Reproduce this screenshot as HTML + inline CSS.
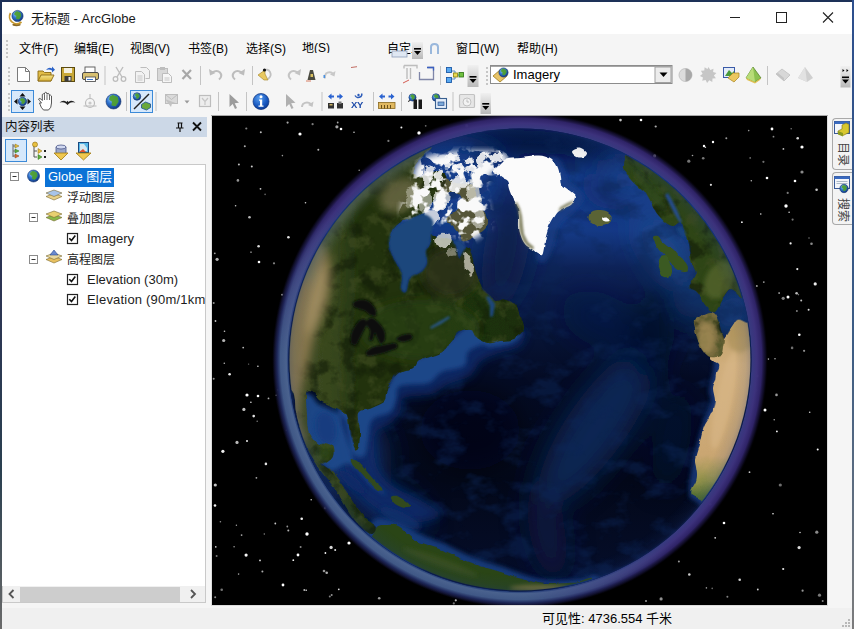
<!DOCTYPE html>
<html lang="zh-CN">
<head>
<meta charset="utf-8">
<title>无标题 - ArcGlobe</title>
<style>
*{box-sizing:border-box;margin:0;padding:0}
html,body{width:854px;height:629px;overflow:hidden;background:#f5f5f5}
body{position:relative;font-family:"Liberation Sans","Noto Sans CJK SC",sans-serif;font-size:12px;color:#111}
.abs{position:absolute}
#win{position:absolute;left:0;top:0;width:854px;height:629px;background:#f5f5f5;overflow:hidden}
#bt{left:0;top:0;width:854px;height:2px;background:#1d3158}
#bl{left:0;top:0;width:2px;height:629px;background:linear-gradient(#1d3158 0%,#2c3454 45%,#2a4050 75%,#6a6a6a 100%)}
#br{left:852px;top:0;width:2px;height:629px;background:linear-gradient(#2d4f8e 0%,#3c5c84 55%,#7c7c7c 100%)}
#title{left:1px;top:2px;width:851px;height:32px;background:#fff}
#title .t{position:absolute;left:30px;top:7px;font-size:13px;line-height:20px;color:#1a1a1a;white-space:nowrap}
#menu{left:1px;top:34px;width:851px;height:28px;background:#f5f5f5}
#menu span{position:absolute;top:7px;font-size:12px;line-height:16px;white-space:nowrap;color:#000}
.grip{position:absolute;width:2px;border-left:2px dotted #b9b9b9}
#tb1{left:1px;top:62px;width:851px;height:27px}
#tb2{left:1px;top:89px;width:851px;height:26px}
#toc{left:1px;top:115px;width:209px;height:493px;background:#f5f5f5}
#tochead{left:0;top:2px;width:206px;height:20px;background:#ccd8e7}
#tochead .t{position:absolute;left:4px;top:1px;font-size:12.5px;line-height:18px;color:#111}
#tree{left:1px;top:49px;width:204px;height:422px;background:#fff;border:1px solid #c9c9c9;border-left:1px solid #fff;border-bottom:none;overflow:hidden}
#tree .r{position:absolute;font-size:12px;line-height:16px;white-space:nowrap;color:#1c1c1c}
#hs{left:1px;top:471px;width:204px;height:17px;background:#f0f0f0;border:1px solid #c9c9c9;border-top:none}
#view{left:212px;top:116px;width:615px;height:489px;background:#000;overflow:hidden}
#vborder{left:211px;top:115px;width:617px;height:491px;background:#dcdcdc;border-top:1px solid #a8a8a8}
#status{left:1px;top:608px;width:851px;height:21px;background:#f0f0f0}
#status .t{position:absolute;left:541px;top:2px;font-size:13px;line-height:18px;white-space:nowrap;color:#000}
.tab{position:absolute;left:832px;width:20px;background:#f3f3f3;border:1px solid #a9a9a9;border-right:none;border-radius:4px 0 0 4px}
.tab .v{position:absolute;left:-3px;width:26px;height:14px;font-size:12px;line-height:14px;color:#444;text-align:center;transform:rotate(90deg);transform-origin:50% 50%;white-space:nowrap}
</style>
</head>
<body>
<div id="win">
  <div id="title" class="abs">
    <div class="t">无标题 - ArcGlobe</div>
  </div>
  <div id="menu" class="abs">
    <div class="grip" style="left:5px;top:6px;height:18px"></div>
    <span style="left:18px">文件(F)</span>
    <span style="left:73px">编辑(E)</span>
    <span style="left:129px">视图(V)</span>
    <span style="left:187px">书签(B)</span>
    <span style="left:245px">选择(S)</span>
    <span style="left:301px;width:29px;height:11px;overflow:hidden;top:8px;line-height:12px">地(S)</span>
    <span style="left:386px;width:25px;overflow:hidden">自定义(C)</span>
    <span style="left:455px">窗口(W)</span>
    <span style="left:516px">帮助(H)</span>
  </div>
  <div id="tb1" class="abs"></div>
  <div id="tb2" class="abs"></div>
  <div id="toc" class="abs">
    <div id="tochead" class="abs"><div class="t">内容列表</div></div>
    <div id="tree" class="abs">
      <div class="r" style="left:42px;top:3px;height:19px;width:69px;background:#0b72d6"></div>
      <div class="r" style="left:45px;top:4px;color:#fff;font-size:13px">Globe 图层</div>
      <div class="r" style="left:64px;top:25px">浮动图层</div>
      <div class="r" style="left:64px;top:46px">叠加图层</div>
      <div class="r" style="left:84px;top:66px;font-size:13px">Imagery</div>
      <div class="r" style="left:64px;top:87px">高程图层</div>
      <div class="r" style="left:84px;top:107px;font-size:13px">Elevation (30m)</div>
      <div class="r" style="left:84px;top:127px;font-size:13px;letter-spacing:0.2px">Elevation (90m/1km)</div>
    </div>
    <div id="hs" class="abs"></div>
  </div>
  <div id="vborder" class="abs"></div>
  <div id="view" class="abs"><svg width="615" height="489" viewBox="212 116 615 489" style="position:absolute;left:0;top:0;display:block">
<defs>
<clipPath id="gc"><circle cx="520.0" cy="360.0" r="231.5"/></clipPath>
<clipPath id="lc"><circle cx="520.0" cy="360.0" r="230.5"/></clipPath>
<radialGradient id="halo" cx="520.0" cy="360.0" r="248.0" gradientUnits="userSpaceOnUse">
 <stop offset="0.93" stop-color="#363c80"/>
 <stop offset="0.955" stop-color="#3c327c"/>
 <stop offset="0.975" stop-color="#31256c" stop-opacity="0.95"/>
 <stop offset="0.99" stop-color="#1a1440" stop-opacity="0.55"/>
 <stop offset="1" stop-color="#05030c" stop-opacity="0"/>
</radialGradient>
<radialGradient id="halo2" cx="520.0" cy="360.0" r="248.0" gradientUnits="userSpaceOnUse">
 <stop offset="0.932" stop-color="#16306e"/>
 <stop offset="0.942" stop-color="#4a628e"/>
 <stop offset="0.966" stop-color="#405886"/>
 <stop offset="0.98" stop-color="#1c2858" stop-opacity="0.9"/>
 <stop offset="1" stop-color="#0a0c20" stop-opacity="0"/>
</radialGradient>
<linearGradient id="hm" x1="356" y1="524" x2="520" y2="360" gradientUnits="userSpaceOnUse">
 <stop offset="0" stop-color="#fff"/>
 <stop offset="0.3" stop-color="#fff"/>
 <stop offset="0.9" stop-color="#fff" stop-opacity="0"/>
</linearGradient>
<mask id="hmask" maskUnits="userSpaceOnUse" x="212" y="116" width="615" height="489"><rect x="212" y="116" width="615" height="489" fill="url(#hm)"/></mask>
<linearGradient id="sea" x1="0" y1="129" x2="0" y2="591" gradientUnits="userSpaceOnUse">
 <stop offset="0" stop-color="#081a48"/>
 <stop offset="0.045" stop-color="#0e2660"/>
 <stop offset="0.10" stop-color="#173e8c"/>
 <stop offset="0.22" stop-color="#153a86"/>
 <stop offset="0.30" stop-color="#0e2358"/>
 <stop offset="0.36" stop-color="#0a1c48"/>
 <stop offset="0.435" stop-color="#071538"/>
 <stop offset="0.54" stop-color="#040b24"/>
 <stop offset="0.76" stop-color="#030819"/>
 <stop offset="1" stop-color="#050e2c"/>
</linearGradient>
<radialGradient id="atm" cx="520.0" cy="360.0" r="231.5" gradientUnits="userSpaceOnUse">
 <stop offset="0" stop-color="#1c3c86" stop-opacity="0"/>
 <stop offset="0.93" stop-color="#1c3c86" stop-opacity="0"/>
 <stop offset="0.975" stop-color="#1c3c86" stop-opacity="0.10"/>
 <stop offset="0.992" stop-color="#1a3880" stop-opacity="0.2"/>
 <stop offset="1" stop-color="#122868" stop-opacity="0.55"/>
</radialGradient>
<linearGradient id="nag" x1="290" y1="0" x2="520" y2="0" gradientUnits="userSpaceOnUse">
 <stop offset="0" stop-color="#424c26"/>
 <stop offset="0.2" stop-color="#35451c"/>
 <stop offset="0.3" stop-color="#22330f"/>
 <stop offset="1" stop-color="#1e2f0e"/>
</linearGradient>
<linearGradient id="afg" x1="0" y1="320" x2="0" y2="500" gradientUnits="userSpaceOnUse">
 <stop offset="0" stop-color="#b89a62"/>
 <stop offset="0.25" stop-color="#d0ae7c"/>
 <stop offset="0.75" stop-color="#caa672"/>
 <stop offset="0.9" stop-color="#8f9048"/>
 <stop offset="1" stop-color="#4c6a2a"/>
</linearGradient>
<filter id="b1" x="-20%" y="-20%" width="140%" height="140%"><feGaussianBlur stdDeviation="0.8"/></filter>
<filter id="rough" x="-10%" y="-10%" width="120%" height="120%"><feTurbulence type="fractalNoise" baseFrequency="0.09" numOctaves="3" seed="4" result="n"/><feDisplacementMap in="SourceGraphic" in2="n" scale="10" xChannelSelector="R" yChannelSelector="G" result="d"/><feGaussianBlur in="d" stdDeviation="0.7"/></filter>
<filter id="rough2" x="-5%" y="-5%" width="110%" height="110%"><feTurbulence type="fractalNoise" baseFrequency="0.07" numOctaves="3" seed="11" result="n"/><feDisplacementMap in="SourceGraphic" in2="n" scale="5" xChannelSelector="R" yChannelSelector="G" result="d"/><feGaussianBlur in="d" stdDeviation="0.7"/></filter>
<filter id="snowf" x="-5%" y="-5%" width="110%" height="110%"><feTurbulence type="fractalNoise" baseFrequency="0.085" numOctaves="3" seed="8" result="n"/><feColorMatrix in="n" type="matrix" values="0 0 0 0 0.95  0 0 0 0 0.95  0 0 0 0 0.95  10 0 0 0 -4.9" result="w"/><feGaussianBlur in="SourceGraphic" stdDeviation="3" result="m"/><feComposite in="w" in2="m" operator="in"/></filter>
<filter id="ltex" color-interpolation-filters="sRGB" x="0" y="0" width="100%" height="100%"><feTurbulence type="fractalNoise" baseFrequency="0.06" numOctaves="4" seed="5" result="n"/><feColorMatrix in="n" type="matrix" values="0 0 0 0 0.25  0 0 0 0 0.30  0 0 0 0 0.13  5 0 0 0 -2.5" result="w"/><feComposite in="w" in2="SourceGraphic" operator="in"/></filter>
<filter id="dtex" color-interpolation-filters="sRGB" x="0" y="0" width="100%" height="100%"><feTurbulence type="fractalNoise" baseFrequency="0.05" numOctaves="4" seed="17" result="n"/><feColorMatrix in="n" type="matrix" values="0 0 0 0 0.07  0 0 0 0 0.11  0 0 0 0 0.03  0 5 0 0 -2.6" result="w"/><feComposite in="w" in2="SourceGraphic" operator="in"/></filter>
<filter id="otex" color-interpolation-filters="sRGB" x="0" y="0" width="100%" height="100%"><feTurbulence type="fractalNoise" baseFrequency="0.03 0.05" numOctaves="4" seed="9" result="n"/><feColorMatrix in="n" type="matrix" values="0 0 0 0 0.05  0 0 0 0 0.15  0 0 0 0 0.34  4 0 0 0 -2.0" result="w"/><feComposite in="w" in2="SourceGraphic" operator="in"/></filter>
<filter id="b2" x="-30%" y="-30%" width="160%" height="160%"><feGaussianBlur stdDeviation="2.2"/></filter>
<filter id="b4" x="-40%" y="-40%" width="180%" height="180%"><feGaussianBlur stdDeviation="5"/></filter>
<filter id="b8" x="-50%" y="-50%" width="200%" height="200%"><feGaussianBlur stdDeviation="13"/></filter>
</defs>
<rect x="212" y="116" width="615" height="489" fill="#000"/>
<g><circle cx="248.6" cy="364.1" r="0.7" fill="#fff" opacity="0.45"/><circle cx="250.9" cy="402.2" r="0.7" fill="#fff" opacity="0.99"/><circle cx="241.6" cy="535.1" r="0.9" fill="#fff" opacity="0.65"/><circle cx="276.2" cy="395.2" r="0.8" fill="#fff" opacity="0.50"/><circle cx="249.5" cy="217.3" r="1.3" fill="#fff" opacity="0.72"/><circle cx="779.1" cy="293.1" r="0.8" fill="#fff" opacity="0.88"/><circle cx="749.5" cy="472.2" r="0.9" fill="#fff" opacity="0.77"/><circle cx="257.9" cy="366.3" r="0.8" fill="#fff" opacity="0.85"/><circle cx="237.0" cy="442.4" r="1.6" fill="#fff" opacity="0.73"/><circle cx="696.7" cy="515.5" r="0.9" fill="#fff" opacity="0.65"/><circle cx="792.1" cy="347.9" r="1.3" fill="#fff" opacity="0.44"/><circle cx="756.8" cy="286.0" r="1.0" fill="#fff" opacity="0.61"/><circle cx="775.0" cy="358.8" r="0.8" fill="#fff" opacity="0.67"/><circle cx="715.2" cy="537.8" r="0.9" fill="#fff" opacity="0.82"/><circle cx="817.7" cy="449.5" r="1.0" fill="#fff" opacity="0.97"/><circle cx="305.5" cy="202.8" r="0.8" fill="#fff" opacity="0.80"/><circle cx="220.4" cy="521.7" r="0.8" fill="#fff" opacity="0.56"/><circle cx="215.5" cy="321.0" r="0.9" fill="#fff" opacity="0.77"/><circle cx="739.7" cy="579.8" r="1.3" fill="#fff" opacity="0.81"/><circle cx="246.1" cy="555.1" r="1.6" fill="#fff" opacity="0.97"/><circle cx="329.8" cy="596.5" r="1.0" fill="#fff" opacity="0.50"/><circle cx="421.5" cy="142.6" r="0.7" fill="#fff" opacity="0.59"/><circle cx="601.9" cy="582.3" r="1.1" fill="#fff" opacity="0.49"/><circle cx="288.3" cy="530.4" r="1.0" fill="#fff" opacity="0.69"/><circle cx="796.6" cy="293.2" r="1.3" fill="#fff" opacity="0.73"/><circle cx="229.6" cy="374.2" r="1.3" fill="#fff" opacity="0.92"/><circle cx="816.8" cy="532.2" r="1.6" fill="#fff" opacity="0.54"/><circle cx="661.1" cy="598.9" r="1.6" fill="#fff" opacity="0.57"/><circle cx="799.3" cy="334.8" r="1.3" fill="#fff" opacity="0.99"/><circle cx="798.4" cy="294.6" r="0.8" fill="#fff" opacity="0.46"/><circle cx="508.9" cy="596.8" r="1.1" fill="#fff" opacity="0.72"/><circle cx="703.2" cy="158.3" r="1.3" fill="#fff" opacity="0.47"/><circle cx="335.2" cy="549.9" r="1.0" fill="#fff" opacity="0.87"/><circle cx="808.6" cy="309.8" r="1.0" fill="#fff" opacity="0.85"/><circle cx="265.1" cy="194.4" r="0.8" fill="#fff" opacity="0.42"/><circle cx="787.7" cy="192.9" r="1.1" fill="#fff" opacity="0.48"/><circle cx="221.7" cy="589.8" r="1.3" fill="#fff" opacity="0.46"/><circle cx="672.4" cy="184.8" r="1.6" fill="#fff" opacity="0.41"/><circle cx="748.7" cy="130.6" r="0.8" fill="#fff" opacity="0.58"/><circle cx="293.3" cy="560.2" r="0.9" fill="#fff" opacity="0.94"/><circle cx="751.3" cy="180.7" r="0.8" fill="#fff" opacity="0.71"/><circle cx="224.5" cy="331.3" r="0.8" fill="#fff" opacity="0.77"/><circle cx="688.7" cy="190.0" r="0.8" fill="#fff" opacity="0.55"/><circle cx="278.0" cy="389.9" r="0.8" fill="#fff" opacity="0.41"/><circle cx="238.9" cy="164.6" r="1.0" fill="#fff" opacity="0.74"/><circle cx="678.9" cy="561.4" r="1.0" fill="#fff" opacity="0.60"/><circle cx="809.7" cy="412.2" r="0.8" fill="#fff" opacity="0.82"/><circle cx="790.6" cy="243.4" r="1.1" fill="#fff" opacity="0.94"/><circle cx="689.3" cy="574.5" r="1.3" fill="#fff" opacity="0.80"/><circle cx="300.6" cy="546.9" r="1.0" fill="#fff" opacity="0.53"/><circle cx="796.9" cy="311.0" r="1.0" fill="#fff" opacity="0.50"/><circle cx="646.0" cy="601.1" r="1.0" fill="#fff" opacity="0.60"/><circle cx="655.7" cy="126.5" r="1.1" fill="#fff" opacity="0.68"/><circle cx="802.0" cy="172.0" r="1.6" fill="#fff" opacity="0.54"/><circle cx="750.2" cy="157.9" r="0.9" fill="#fff" opacity="0.42"/><circle cx="292.4" cy="322.6" r="1.3" fill="#fff" opacity="0.71"/><circle cx="776.5" cy="394.9" r="1.3" fill="#fff" opacity="0.60"/><circle cx="325.4" cy="553.0" r="0.9" fill="#fff" opacity="0.96"/><circle cx="264.3" cy="534.0" r="0.7" fill="#fff" opacity="0.56"/><circle cx="287.6" cy="122.6" r="1.1" fill="#fff" opacity="0.65"/><circle cx="774.2" cy="419.8" r="0.7" fill="#fff" opacity="0.72"/><circle cx="359.2" cy="170.3" r="0.8" fill="#fff" opacity="0.56"/><circle cx="324.0" cy="571.0" r="1.3" fill="#fff" opacity="0.58"/><circle cx="425.7" cy="125.8" r="0.9" fill="#fff" opacity="0.42"/><circle cx="224.3" cy="363.3" r="0.8" fill="#fff" opacity="0.71"/><circle cx="757.8" cy="589.5" r="0.9" fill="#fff" opacity="0.81"/><circle cx="815.2" cy="283.9" r="1.6" fill="#fff" opacity="0.93"/><circle cx="819.5" cy="595.2" r="1.6" fill="#fff" opacity="0.48"/><circle cx="256.4" cy="477.8" r="0.9" fill="#fff" opacity="0.66"/><circle cx="247.0" cy="441.0" r="1.0" fill="#fff" opacity="0.92"/><circle cx="802.6" cy="590.7" r="1.1" fill="#fff" opacity="0.59"/><circle cx="234.1" cy="546.7" r="0.8" fill="#fff" opacity="0.61"/><circle cx="213.7" cy="302.9" r="1.0" fill="#fff" opacity="0.57"/><circle cx="688.8" cy="161.2" r="1.6" fill="#fff" opacity="0.45"/><circle cx="457.9" cy="137.3" r="0.7" fill="#fff" opacity="0.46"/><circle cx="800.0" cy="532.5" r="0.8" fill="#fff" opacity="0.79"/><circle cx="816.6" cy="189.8" r="1.3" fill="#fff" opacity="0.77"/><circle cx="301.7" cy="518.7" r="1.3" fill="#fff" opacity="0.94"/><circle cx="710.9" cy="184.8" r="1.1" fill="#fff" opacity="0.85"/><circle cx="222.9" cy="451.3" r="1.6" fill="#fff" opacity="0.94"/><circle cx="354.0" cy="132.2" r="0.8" fill="#fff" opacity="0.78"/><circle cx="801.2" cy="300.4" r="1.0" fill="#fff" opacity="0.74"/><circle cx="215.0" cy="505.5" r="1.3" fill="#fff" opacity="0.96"/><circle cx="763.4" cy="161.8" r="1.1" fill="#fff" opacity="0.44"/><circle cx="258.6" cy="246.3" r="1.3" fill="#fff" opacity="0.85"/><circle cx="260.0" cy="560.4" r="0.9" fill="#fff" opacity="0.86"/><circle cx="260.5" cy="188.8" r="0.9" fill="#fff" opacity="0.79"/><circle cx="510.8" cy="590.6" r="0.7" fill="#fff" opacity="0.65"/><circle cx="760.8" cy="214.0" r="0.7" fill="#fff" opacity="0.96"/><circle cx="223.7" cy="340.5" r="1.6" fill="#fff" opacity="0.70"/><circle cx="822.7" cy="601.1" r="1.0" fill="#fff" opacity="0.53"/><circle cx="792.6" cy="219.6" r="1.1" fill="#fff" opacity="0.45"/><circle cx="282.1" cy="294.8" r="1.0" fill="#fff" opacity="0.75"/><circle cx="511.0" cy="129.1" r="0.7" fill="#fff" opacity="0.78"/><circle cx="789.1" cy="212.3" r="0.7" fill="#fff" opacity="0.94"/><circle cx="453.8" cy="603.4" r="1.1" fill="#fff" opacity="0.45"/><circle cx="780.3" cy="485.0" r="1.6" fill="#fff" opacity="0.43"/><circle cx="275.3" cy="523.5" r="0.9" fill="#fff" opacity="0.78"/><circle cx="304.3" cy="589.9" r="1.0" fill="#fff" opacity="0.71"/><circle cx="799.1" cy="547.6" r="1.6" fill="#fff" opacity="0.86"/><circle cx="262.4" cy="571.6" r="1.0" fill="#fff" opacity="0.67"/><circle cx="388.4" cy="140.9" r="1.1" fill="#fff" opacity="0.48"/><circle cx="811.5" cy="243.7" r="1.3" fill="#fff" opacity="0.54"/><circle cx="286.4" cy="430.2" r="0.7" fill="#fff" opacity="0.42"/><circle cx="768.4" cy="359.1" r="0.8" fill="#fff" opacity="0.67"/><circle cx="336.9" cy="126.8" r="1.6" fill="#fff" opacity="0.65"/><circle cx="251.0" cy="252.2" r="0.9" fill="#fff" opacity="0.48"/><circle cx="741.9" cy="222.2" r="0.9" fill="#fff" opacity="0.94"/><circle cx="712.2" cy="588.4" r="0.8" fill="#fff" opacity="0.42"/><circle cx="647.9" cy="553.2" r="1.0" fill="#fff" opacity="0.78"/><circle cx="783.2" cy="569.0" r="1.1" fill="#fff" opacity="0.91"/><circle cx="809.0" cy="238.0" r="0.7" fill="#fff" opacity="0.53"/><circle cx="306.2" cy="590.3" r="0.7" fill="#fff" opacity="0.96"/><circle cx="776.9" cy="431.4" r="0.9" fill="#fff" opacity="0.98"/><circle cx="274.0" cy="263.3" r="1.1" fill="#fff" opacity="0.52"/><circle cx="213.7" cy="378.8" r="1.0" fill="#fff" opacity="0.57"/><circle cx="548.3" cy="131.3" r="1.0" fill="#fff" opacity="0.66"/><circle cx="401.4" cy="127.6" r="1.0" fill="#fff" opacity="0.93"/><circle cx="217.1" cy="259.3" r="1.6" fill="#fff" opacity="0.70"/><circle cx="338.8" cy="589.3" r="0.9" fill="#fff" opacity="0.86"/><circle cx="375.5" cy="550.1" r="0.7" fill="#fff" opacity="0.78"/><circle cx="620.8" cy="579.0" r="0.8" fill="#fff" opacity="0.76"/><circle cx="246.3" cy="128.5" r="1.1" fill="#fff" opacity="0.49"/><circle cx="244.8" cy="146.3" r="1.0" fill="#fff" opacity="0.67"/><circle cx="282.4" cy="155.6" r="0.8" fill="#fff" opacity="0.60"/><circle cx="326.7" cy="572.8" r="1.3" fill="#fff" opacity="0.68"/><circle cx="727.4" cy="596.7" r="1.0" fill="#fff" opacity="0.50"/><circle cx="214.8" cy="253.3" r="0.9" fill="#fff" opacity="0.65"/><circle cx="755.6" cy="390.3" r="1.6" fill="#fff" opacity="0.42"/><circle cx="243.2" cy="347.6" r="0.9" fill="#fff" opacity="0.72"/><circle cx="705.4" cy="147.2" r="0.8" fill="#fff" opacity="0.85"/><circle cx="763.8" cy="282.1" r="0.9" fill="#fff" opacity="0.60"/><circle cx="797.7" cy="138.2" r="1.3" fill="#fff" opacity="0.83"/><circle cx="215.3" cy="485.0" r="1.6" fill="#fff" opacity="0.78"/><circle cx="791.2" cy="128.8" r="0.8" fill="#fff" opacity="0.46"/><circle cx="773.0" cy="513.8" r="0.8" fill="#fff" opacity="0.96"/><circle cx="325.1" cy="507.9" r="1.3" fill="#fff" opacity="0.47"/><circle cx="357.8" cy="536.4" r="1.0" fill="#fff" opacity="0.49"/><circle cx="692.5" cy="155.5" r="0.8" fill="#fff" opacity="0.64"/><circle cx="257.2" cy="421.2" r="0.8" fill="#fff" opacity="0.46"/><circle cx="287.3" cy="526.5" r="0.9" fill="#fff" opacity="0.57"/><circle cx="326.9" cy="231.7" r="0.9" fill="#fff" opacity="0.74"/><circle cx="455.8" cy="600.3" r="1.1" fill="#fff" opacity="0.72"/><circle cx="215.8" cy="546.9" r="0.8" fill="#fff" opacity="0.90"/><circle cx="773.5" cy="136.7" r="0.9" fill="#fff" opacity="0.54"/><circle cx="243.9" cy="409.4" r="1.6" fill="#fff" opacity="0.75"/><circle cx="783.2" cy="298.3" r="1.6" fill="#fff" opacity="0.51"/><circle cx="620.5" cy="120.1" r="1.3" fill="#fff" opacity="0.76"/><circle cx="337.7" cy="122.5" r="0.9" fill="#fff" opacity="0.65"/><circle cx="260.8" cy="132.3" r="1.0" fill="#fff" opacity="0.73"/><circle cx="251.8" cy="166.4" r="1.0" fill="#fff" opacity="0.80"/><circle cx="379.2" cy="598.3" r="1.3" fill="#fff" opacity="0.58"/><circle cx="797.3" cy="269.1" r="1.1" fill="#fff" opacity="0.93"/><circle cx="466.8" cy="125.9" r="1.6" fill="#fff" opacity="0.80"/><circle cx="216.6" cy="556.1" r="1.0" fill="#fff" opacity="0.47"/><circle cx="268.5" cy="398.4" r="0.9" fill="#fff" opacity="0.68"/><circle cx="312.6" cy="124.2" r="1.1" fill="#fff" opacity="0.49"/><circle cx="318.3" cy="149.7" r="1.0" fill="#fff" opacity="0.69"/><circle cx="706.4" cy="587.9" r="0.8" fill="#fff" opacity="0.58"/><circle cx="726.3" cy="138.2" r="1.0" fill="#fff" opacity="0.59"/><circle cx="265.9" cy="463.9" r="1.3" fill="#fff" opacity="0.89"/><circle cx="311.2" cy="499.7" r="0.8" fill="#fff" opacity="0.77"/><circle cx="238.6" cy="574.1" r="0.8" fill="#fff" opacity="0.63"/><circle cx="288.4" cy="237.3" r="1.3" fill="#fff" opacity="0.89"/><circle cx="331.1" cy="547.4" r="1.6" fill="#fff" opacity="0.85"/><circle cx="236.4" cy="525.2" r="0.7" fill="#fff" opacity="0.63"/><circle cx="215.2" cy="597.2" r="1.0" fill="#fff" opacity="0.54"/><circle cx="291.7" cy="326.7" r="0.7" fill="#fff" opacity="0.71"/><circle cx="237.9" cy="180.4" r="1.3" fill="#fff" opacity="0.59"/><circle cx="654.6" cy="155.9" r="1.6" fill="#fff" opacity="0.56"/><circle cx="444.6" cy="580.1" r="0.8" fill="#fff" opacity="0.33"/><circle cx="253.7" cy="416.1" r="1.3" fill="#fff" opacity="0.89"/><circle cx="331.7" cy="595.1" r="1.0" fill="#fff" opacity="0.57"/><circle cx="710.1" cy="504.2" r="1.3" fill="#fff" opacity="0.70"/><circle cx="783.4" cy="148.9" r="0.9" fill="#fff" opacity="0.77"/><circle cx="804.1" cy="350.8" r="1.1" fill="#fff" opacity="0.56"/><circle cx="235.6" cy="205.7" r="0.8" fill="#fff" opacity="0.78"/><circle cx="300.0" cy="134.0" r="1.6" fill="#fff"/><circle cx="419.0" cy="133.0" r="1.7" fill="#fff"/><circle cx="247.0" cy="395.0" r="1.6" fill="#fff"/><circle cx="258.0" cy="396.0" r="1.3" fill="#fff"/><circle cx="341.0" cy="129.0" r="1.3" fill="#fff"/><circle cx="786.0" cy="206.0" r="1.7" fill="#fff"/><circle cx="802.0" cy="147.0" r="1.6" fill="#fff"/><circle cx="772.0" cy="129.0" r="1.4" fill="#fff"/><circle cx="788.0" cy="297.0" r="1.5" fill="#fff"/><circle cx="747.0" cy="415.0" r="1.6" fill="#fff"/><circle cx="765.0" cy="410.0" r="1.5" fill="#fff"/><circle cx="307.0" cy="534.0" r="1.7" fill="#fff"/><circle cx="298.0" cy="555.0" r="1.4" fill="#fff"/><circle cx="349.0" cy="543.0" r="1.6" fill="#fff"/><circle cx="283.0" cy="585.0" r="1.4" fill="#fff"/><circle cx="259.0" cy="262.0" r="1.3" fill="#fff"/><circle cx="767.0" cy="178.0" r="1.3" fill="#fff"/><circle cx="795.0" cy="181.0" r="1.3" fill="#fff"/><circle cx="704.0" cy="146.0" r="1.2" fill="#fff"/><circle cx="713.0" cy="142.0" r="1.2" fill="#fff"/><circle cx="746.0" cy="338.0" r="1.3" fill="#fff"/><circle cx="757.0" cy="376.0" r="1.4" fill="#fff"/><circle cx="724.0" cy="523.0" r="1.3" fill="#fff"/><circle cx="641.0" cy="120.0" r="1.3" fill="#fff"/></g>
<circle cx="520.0" cy="360.0" r="248.0" fill="url(#halo)"/>
<circle cx="520.0" cy="360.0" r="248.0" fill="url(#halo2)" mask="url(#hmask)"/>
<g clip-path="url(#gc)">
<circle cx="520.0" cy="360.0" r="232.5" fill="url(#sea)"/>
<g filter="url(#b8)"><ellipse cx="455.0" cy="178.0" rx="44.0" ry="34.0" fill="#173f8c" transform="rotate(-20 455 178)" opacity="0.95"/><ellipse cx="430.0" cy="160.0" rx="30.0" ry="12.0" fill="#173f8c" transform="rotate(-30 430 160)" opacity="0.8"/><ellipse cx="506.0" cy="250.0" rx="22.0" ry="62.0" fill="#091b46" transform="rotate(10 506 250)" opacity="0.95"/><ellipse cx="503.0" cy="200.0" rx="12.0" ry="28.0" fill="#0c2058" transform="rotate(20 503 200)" opacity="0.9"/><ellipse cx="602.0" cy="192.0" rx="26.0" ry="14.0" fill="#0e2868" transform="rotate(35 602 192)" opacity="0.8"/><ellipse cx="535.0" cy="142.0" rx="85.0" ry="12.0" fill="#05123a" transform="rotate(3 535 142)" opacity="0.95"/><ellipse cx="668.0" cy="250.0" rx="20.0" ry="40.0" fill="#1a488a" transform="rotate(-35 668 250)" opacity="0.95"/><ellipse cx="692.0" cy="298.0" rx="10.0" ry="20.0" fill="#1a488a" transform="rotate(-10 692 298)" opacity="0.85"/><ellipse cx="630.0" cy="180.0" rx="30.0" ry="14.0" fill="#184488" transform="rotate(38 630 180)" opacity="0.7"/><ellipse cx="598.0" cy="425.0" rx="30.0" ry="95.0" fill="#0d2a5a" transform="rotate(35 598 425)" opacity="0.9"/><ellipse cx="547.0" cy="530.0" rx="18.0" ry="50.0" fill="#0a1c48" transform="rotate(-10 547 530)" opacity="0.7"/><ellipse cx="600.0" cy="320.0" rx="40.0" ry="26.0" fill="#0a1c48" transform="rotate(25 600 320)" opacity="0.5"/><ellipse cx="652.0" cy="335.0" rx="22.0" ry="42.0" fill="#050d28" transform="rotate(8 652 335)" opacity="0.85"/><ellipse cx="672.0" cy="440.0" rx="18.0" ry="50.0" fill="#071338" transform="rotate(10 672 440)" opacity="0.6"/><ellipse cx="470.0" cy="430.0" rx="50.0" ry="40.0" fill="#02050f" opacity="0.6"/><ellipse cx="345.0" cy="450.0" rx="36.0" ry="46.0" fill="#173c7c" transform="rotate(-25 345 450)" opacity="0.9"/><ellipse cx="385.0" cy="505.0" rx="46.0" ry="20.0" fill="#133270" transform="rotate(32 385 505)" opacity="0.9"/><ellipse cx="732.0" cy="312.0" rx="20.0" ry="28.0" fill="#1a4688" transform="rotate(20 732 312)" opacity="0.9"/></g>
<rect x="285" y="125" width="470" height="470" fill="#fff" filter="url(#otex)" opacity="0.5"/>
<g filter="url(#b4)"><path d="M524.0 330.0 C527.3 331.7 524.7 342.0 520.0 346.0 C515.3 350.0 502.7 351.3 496.0 354.0 C489.3 356.7 484.3 358.3 480.0 362.0 C475.7 365.7 475.3 372.3 470.0 376.0 C464.7 379.7 454.3 381.0 448.0 384.0 C441.7 387.0 439.3 391.7 432.0 394.0 C424.7 396.3 409.3 395.0 404.0 398.0 C398.7 401.0 402.3 407.7 400.0 412.0 C397.7 416.3 394.0 420.7 390.0 424.0 C386.0 427.3 378.7 427.3 376.0 432.0 C373.3 436.7 373.7 445.7 374.0 452.0 C374.3 458.3 375.0 464.3 378.0 470.0 C381.0 475.7 385.0 481.0 392.0 486.0 C399.0 491.0 412.0 495.0 420.0 500.0 C428.0 505.0 443.3 512.7 440.0 516.0 C436.7 519.3 415.0 526.0 400.0 520.0 C385.0 514.0 360.0 500.0 350.0 480.0 C340.0 460.0 335.0 414.2 340.0 400.0 C345.0 385.8 370.0 400.3 380.0 395.0 C390.0 389.7 390.0 375.8 400.0 368.0 C410.0 360.2 428.3 355.0 440.0 348.0 C451.7 341.0 460.0 328.0 470.0 326.0 C480.0 324.0 491.0 335.3 500.0 336.0 C509.0 336.7 520.7 328.3 524.0 330.0Z" fill="#0e2a66" opacity="0.9"/></g>
<g filter="url(#b2)"><path d="M522.0 332.0 C524.0 333.2 517.3 340.5 512.0 343.0 C506.7 345.5 495.0 346.7 490.0 347.0 C485.0 347.3 485.7 344.2 482.0 345.0 C478.3 345.8 471.0 348.5 468.0 352.0 C465.0 355.5 468.3 362.7 464.0 366.0 C459.7 369.3 448.0 369.2 442.0 372.0 C436.0 374.8 435.0 380.7 428.0 383.0 C421.0 385.3 405.3 383.2 400.0 386.0 C394.7 388.8 397.7 395.7 396.0 400.0 C394.3 404.3 394.0 408.7 390.0 412.0 C386.0 415.3 375.7 415.3 372.0 420.0 C368.3 424.7 369.3 434.0 368.0 440.0 C366.7 446.0 366.7 454.0 364.0 456.0 C361.3 458.0 355.2 458.0 352.0 452.0 C348.8 446.0 348.7 427.0 345.0 420.0 C341.3 413.0 334.5 412.7 330.0 410.0 C325.5 407.3 321.0 406.3 318.0 404.0 C315.0 401.7 314.5 397.5 312.0 396.0 C309.5 394.5 304.7 389.3 303.0 395.0 C301.3 400.7 300.5 420.8 302.0 430.0 C303.5 439.2 307.3 443.3 312.0 450.0 C316.7 456.7 323.7 467.7 330.0 470.0 C336.3 472.3 343.0 461.3 350.0 464.0 C357.0 466.7 366.0 481.0 372.0 486.0 C378.0 491.0 388.0 496.7 386.0 494.0 C384.0 491.3 365.7 476.5 360.0 470.0 C354.3 463.5 355.3 466.7 352.0 455.0 C348.7 443.3 335.3 410.0 340.0 400.0 C344.7 390.0 370.0 400.3 380.0 395.0 C390.0 389.7 390.0 375.8 400.0 368.0 C410.0 360.2 428.3 355.0 440.0 348.0 C451.7 341.0 460.0 328.0 470.0 326.0 C480.0 324.0 491.3 335.0 500.0 336.0 C508.7 337.0 520.0 330.8 522.0 332.0Z" fill="#1c4a8a" opacity="0.95"/><path d="M372.0 522.0 C375.0 515.5 390.0 519.0 398.0 521.0 C406.0 523.0 412.2 530.2 420.0 534.0 C427.8 537.8 436.7 540.3 445.0 544.0 C453.3 547.7 460.8 552.3 470.0 556.0 C479.2 559.7 488.3 562.2 500.0 566.0 C511.7 569.8 526.7 576.8 540.0 579.0 C553.3 581.2 570.7 579.7 580.0 579.0 C589.3 578.3 593.3 573.2 596.0 575.0 C598.7 576.8 632.0 592.5 596.0 590.0 C560.0 587.5 417.3 571.3 380.0 560.0 C342.7 548.7 369.0 528.5 372.0 522.0Z" fill="#173e80" opacity="0.9"/><path d="M716.0 356.0 C713.2 358.0 714.2 366.3 713.0 372.0 C711.8 377.7 709.3 385.0 709.0 390.0 C708.7 395.0 711.8 397.0 711.0 402.0 C710.2 407.0 706.2 413.7 704.0 420.0 C701.8 426.3 699.8 433.3 698.0 440.0 C696.2 446.7 694.5 451.7 693.0 460.0 C691.5 468.3 688.8 483.3 689.0 490.0 C689.2 496.7 688.8 498.3 694.0 500.0 C699.2 501.7 714.0 523.3 720.0 500.0 C726.0 476.7 730.7 384.0 730.0 360.0 C729.3 336.0 718.8 354.0 716.0 356.0Z" fill="#153a7c" opacity="0.85"/><path d="M548.0 158.0 C548.7 154.7 556.7 156.3 560.0 160.0 C563.3 163.7 564.0 174.0 568.0 180.0 C572.0 186.0 583.0 190.7 584.0 196.0 C585.0 201.3 578.0 207.3 574.0 212.0 C570.0 216.7 563.7 217.7 560.0 224.0 C556.3 230.3 554.7 243.7 552.0 250.0 C549.3 256.3 546.7 261.0 544.0 262.0 C541.3 263.0 535.7 261.3 536.0 256.0 C536.3 250.7 542.7 237.7 546.0 230.0 C549.3 222.3 552.7 215.0 556.0 210.0 C559.3 205.0 566.0 205.0 566.0 200.0 C566.0 195.0 559.0 187.0 556.0 180.0 C553.0 173.0 547.3 161.3 548.0 158.0Z" fill="#173f86" opacity="0.7"/></g>
<g filter="url(#b2)"><ellipse cx="326.0" cy="428.0" rx="10.0" ry="16.0" fill="#163a7e" transform="rotate(-10 326 428)" opacity="0.9"/><ellipse cx="352.0" cy="482.0" rx="16.0" ry="5.0" fill="#0f2a66" transform="rotate(42 352 482)" opacity="0.9"/><ellipse cx="400.0" cy="518.0" rx="22.0" ry="6.0" fill="#122e6c" transform="rotate(25 400 518)" opacity="0.8"/></g>
<g clip-path="url(#lc)"><g filter="url(#rough2)">
<path d="M432.0 147.0 C430.9 150.2 426.7 152.3 424.0 155.0 C421.3 157.7 417.7 160.2 416.0 163.0 C414.3 165.8 413.3 169.7 414.0 172.0 C414.7 174.3 417.3 176.8 420.0 177.0 C422.7 177.2 427.0 174.0 430.0 173.0 C433.0 172.0 435.3 170.5 438.0 171.0 C440.7 171.5 445.0 173.5 446.0 176.0 C447.0 178.5 445.5 182.7 444.0 186.0 C442.5 189.3 439.3 192.8 437.0 196.0 C434.7 199.2 432.2 202.2 430.0 205.0 C427.8 207.8 427.0 210.7 424.0 213.0 C421.0 215.3 416.0 217.5 412.0 219.0 C408.0 220.5 403.3 220.0 400.0 222.0 C396.7 224.0 393.8 227.2 392.0 231.0 C390.2 234.8 388.7 240.3 389.0 245.0 C389.3 249.7 392.2 255.0 394.0 259.0 C395.8 263.0 398.7 265.8 400.0 269.0 C401.3 272.2 401.8 274.7 402.0 278.0 C402.2 281.3 400.3 286.7 401.0 289.0 C401.7 291.3 404.5 293.8 406.0 292.0 C407.5 290.2 407.5 281.3 410.0 278.0 C412.5 274.7 418.2 274.5 421.0 272.0 C423.8 269.5 426.2 266.5 427.0 263.0 C427.8 259.5 425.3 254.2 426.0 251.0 C426.7 247.8 430.3 246.5 431.0 244.0 C431.7 241.5 429.5 237.3 430.0 236.0 C430.5 234.7 431.8 235.7 434.0 236.0 C436.2 236.3 440.0 237.2 443.0 238.0 C446.0 238.8 449.8 239.7 452.0 241.0 C454.2 242.3 454.8 243.2 456.0 246.0 C457.2 248.8 457.8 257.0 459.0 258.0 C460.2 259.0 461.8 253.8 463.0 252.0 C464.2 250.2 464.7 246.8 466.0 247.0 C467.3 247.2 469.3 248.8 471.0 253.0 C472.7 257.2 474.2 266.3 476.0 272.0 C477.8 277.7 479.7 283.2 482.0 287.0 C484.3 290.8 487.7 292.7 490.0 295.0 C492.3 297.3 493.3 300.3 496.0 301.0 C498.7 301.7 502.7 298.2 506.0 299.0 C509.3 299.8 513.7 303.2 516.0 306.0 C518.3 308.8 518.8 312.0 520.0 316.0 C521.2 320.0 524.0 326.2 523.0 330.0 C522.0 333.8 517.8 337.2 514.0 339.0 C510.2 340.8 504.3 340.3 500.0 341.0 C495.7 341.7 492.0 343.7 488.0 343.0 C484.0 342.3 478.8 339.2 476.0 337.0 C473.2 334.8 473.8 331.0 471.0 330.0 C468.2 329.0 462.2 329.2 459.0 331.0 C455.8 332.8 454.8 337.5 452.0 341.0 C449.2 344.5 445.7 349.3 442.0 352.0 C438.3 354.7 433.8 355.7 430.0 357.0 C426.2 358.3 421.8 358.2 419.0 360.0 C416.2 361.8 416.2 366.0 413.0 368.0 C409.8 370.0 404.0 369.3 400.0 372.0 C396.0 374.7 391.3 380.3 389.0 384.0 C386.7 387.7 386.8 391.2 386.0 394.0 C385.2 396.8 386.3 398.8 384.0 401.0 C381.7 403.2 376.3 405.0 372.0 407.0 C367.7 409.0 360.0 409.2 358.0 413.0 C356.0 416.8 359.8 424.7 360.0 430.0 C360.2 435.3 359.7 441.8 359.0 445.0 C358.3 448.2 357.2 449.8 356.0 449.0 C354.8 448.2 353.2 443.8 352.0 440.0 C350.8 436.2 349.8 430.2 349.0 426.0 C348.2 421.8 348.3 417.5 347.0 415.0 C345.7 412.5 343.8 412.7 341.0 411.0 C338.2 409.3 333.5 406.8 330.0 405.0 C326.5 403.2 322.7 402.2 320.0 400.0 C317.3 397.8 316.2 393.5 314.0 392.0 C311.8 390.5 308.3 389.7 307.0 391.0 C305.7 392.3 306.0 396.0 306.0 400.0 C306.0 404.0 306.7 410.0 307.0 415.0 C307.3 420.0 306.8 425.8 308.0 430.0 C309.2 434.2 312.2 437.5 314.0 440.0 C315.8 442.5 317.5 444.5 319.0 445.0 C320.5 445.5 320.8 442.8 323.0 443.0 C325.2 443.2 330.3 443.8 332.0 446.0 C333.7 448.2 333.8 453.3 333.0 456.0 C332.2 458.7 329.0 460.8 327.0 462.0 C325.0 463.2 320.5 461.7 321.0 463.0 C321.5 464.3 326.8 466.8 330.0 470.0 C333.2 473.2 337.2 478.3 340.0 482.0 C342.8 485.7 344.8 488.7 347.0 492.0 C349.2 495.3 351.0 498.8 353.0 502.0 C355.0 505.2 356.7 508.0 359.0 511.0 C361.3 514.0 364.2 517.3 367.0 520.0 C369.8 522.7 375.2 524.7 376.0 527.0 C376.8 529.3 374.3 533.8 372.0 534.0 C369.7 534.2 365.2 530.7 362.0 528.0 C358.8 525.3 355.7 521.5 353.0 518.0 C350.3 514.5 348.3 510.8 346.0 507.0 C343.7 503.2 341.3 498.8 339.0 495.0 C336.7 491.2 334.7 487.7 332.0 484.0 C329.3 480.3 326.0 477.0 323.0 473.0 C320.0 469.0 316.8 464.5 314.0 460.0 C311.2 455.5 308.3 451.0 306.0 446.0 C303.7 441.0 301.7 435.7 300.0 430.0 C298.3 424.3 297.2 418.3 296.0 412.0 C294.8 405.7 295.7 396.4 293.0 392.0 C290.3 387.6 282.2 388.4 279.9 385.5 C277.5 382.7 279.2 378.6 279.0 375.2 C278.8 371.7 278.6 368.2 278.5 364.7 C278.5 361.2 278.5 357.8 278.6 354.3 C278.6 350.8 278.8 347.3 279.0 343.9 C279.3 340.4 279.6 336.9 280.0 333.5 C280.3 330.0 280.8 326.6 281.3 323.1 C281.9 319.7 282.5 316.3 283.1 312.9 C283.8 309.4 284.6 306.0 285.4 302.7 C286.2 299.3 287.1 295.9 288.1 292.6 C289.1 289.2 290.1 285.9 291.2 282.6 C292.3 279.3 293.5 276.1 294.8 272.8 C296.0 269.6 297.4 266.4 298.8 263.2 C300.2 260.0 301.6 256.8 303.1 253.7 C304.7 250.6 306.3 247.5 307.9 244.4 C309.6 241.4 311.3 238.4 313.1 235.4 C314.9 232.4 316.8 229.5 318.7 226.6 C320.6 223.7 322.6 220.8 324.7 218.0 C326.7 215.2 328.8 212.4 331.0 209.7 C333.1 207.0 335.4 204.3 337.6 201.7 C339.9 199.0 342.3 196.5 344.7 193.9 C347.0 191.4 349.5 188.9 352.0 186.5 C354.5 184.1 357.0 181.7 359.6 179.4 C362.2 177.1 364.9 174.9 367.6 172.7 C370.3 170.5 373.0 168.3 375.8 166.3 C378.6 164.2 381.5 162.2 384.3 160.2 C387.2 158.3 390.1 156.4 393.1 154.5 C396.0 152.7 399.0 150.9 402.1 149.2 C405.1 147.6 408.2 145.9 411.3 144.4 C414.4 142.8 417.5 141.3 420.7 139.9 C423.9 138.4 428.4 134.6 430.3 135.8 C432.2 137.0 433.1 143.8 432.0 147.0Z" fill="url(#nag)" />
<path d="M377.0 528.0 C380.1 524.1 384.5 525.3 388.0 525.0 C391.5 524.7 394.8 524.7 398.0 526.0 C401.2 527.3 404.2 530.7 407.0 533.0 C409.8 535.3 411.5 538.0 415.0 540.0 C418.5 542.0 423.8 543.5 428.0 545.0 C432.2 546.5 435.8 547.3 440.0 549.0 C444.2 550.7 448.5 553.0 453.0 555.0 C457.5 557.0 462.5 559.2 467.0 561.0 C471.5 562.8 475.5 564.5 480.0 566.0 C484.5 567.5 489.5 568.7 494.0 570.0 C498.5 571.3 502.8 572.7 507.0 574.0 C511.2 575.3 513.8 576.5 519.0 578.0 C524.2 579.5 532.5 582.0 538.0 583.0 C543.5 584.0 547.2 584.0 552.0 584.0 C556.8 584.0 562.3 583.3 567.0 583.0 C571.7 582.7 575.8 582.7 580.0 582.0 C584.2 581.3 588.5 578.1 592.0 579.0 C595.5 579.9 601.4 585.5 600.9 587.5 C600.4 589.6 593.2 590.2 589.2 591.4 C585.3 592.5 581.4 593.6 577.4 594.6 C573.4 595.6 569.4 596.4 565.4 597.2 C561.4 598.0 557.4 598.6 553.3 599.2 C549.3 599.8 545.2 600.2 541.1 600.6 C537.0 600.9 532.9 601.2 528.9 601.3 C524.8 601.5 520.7 601.5 516.6 601.5 C512.5 601.4 508.4 601.3 504.3 601.0 C500.3 600.7 496.2 600.4 492.1 599.9 C488.0 599.4 484.0 598.8 480.0 598.2 C475.9 597.5 471.9 596.7 467.9 595.8 C463.9 594.9 459.9 593.9 456.0 592.9 C452.1 591.8 448.1 590.6 444.3 589.3 C440.4 588.0 436.5 586.6 432.7 585.2 C428.9 583.7 425.1 582.1 421.4 580.4 C417.6 578.8 414.0 577.0 410.3 575.2 C406.7 573.3 403.1 571.3 399.5 569.3 C396.0 567.3 392.5 565.1 389.0 562.9 C385.6 560.7 382.2 558.4 378.9 556.0 C375.6 553.6 369.5 553.2 369.1 548.6 C368.8 543.9 373.9 531.9 377.0 528.0Z" fill="#2c4416" />
<path d="M710.0 359.0 C709.5 356.7 714.0 353.0 716.0 350.0 C718.0 347.0 720.2 343.7 722.0 341.0 C723.8 338.3 725.2 336.7 727.0 334.0 C728.8 331.3 731.2 327.5 733.0 325.0 C734.8 322.5 735.8 319.5 738.0 319.0 C740.2 318.5 743.7 320.8 746.0 322.0 C748.3 323.2 749.8 325.0 752.0 326.0 C754.2 327.0 757.9 325.8 759.4 328.1 C760.8 330.4 760.3 336.0 760.7 339.9 C761.0 343.9 761.2 347.9 761.4 351.8 C761.5 355.8 761.5 359.8 761.5 363.7 C761.4 367.7 761.2 371.7 761.0 375.6 C760.7 379.6 760.4 383.6 759.9 387.5 C759.5 391.5 758.9 395.4 758.3 399.3 C757.6 403.2 756.9 407.1 756.0 411.0 C755.2 414.9 754.3 418.8 753.2 422.6 C752.2 426.4 751.1 430.3 749.9 434.0 C748.7 437.8 747.3 441.6 745.9 445.3 C744.5 449.0 743.0 452.7 741.5 456.3 C739.9 460.0 738.2 463.6 736.4 467.1 C734.7 470.7 732.8 474.2 730.9 477.7 C729.0 481.1 726.9 484.6 724.8 487.9 C722.7 491.3 720.5 494.6 718.3 497.9 C716.0 501.1 714.3 507.1 711.2 507.5 C708.2 507.8 703.2 501.9 700.0 500.0 C696.8 498.1 693.3 497.8 692.0 496.0 C690.7 494.2 691.3 491.5 692.0 489.0 C692.7 486.5 695.2 483.5 696.0 481.0 C696.8 478.5 697.0 476.5 697.0 474.0 C697.0 471.5 696.3 468.5 696.0 466.0 C695.7 463.5 694.7 462.0 695.0 459.0 C695.3 456.0 697.2 451.0 698.0 448.0 C698.8 445.0 699.0 444.7 700.0 441.0 C701.0 437.3 702.3 430.3 704.0 426.0 C705.7 421.7 708.2 419.0 710.0 415.0 C711.8 411.0 714.5 406.5 715.0 402.0 C715.5 397.5 712.8 391.7 713.0 388.0 C713.2 384.3 715.3 382.5 716.0 380.0 C716.7 377.5 716.5 375.7 717.0 373.0 C717.5 370.3 720.2 366.3 719.0 364.0 C717.8 361.7 710.5 361.3 710.0 359.0Z" fill="url(#afg)" />
<path d="M624.0 166.0 C623.4 170.6 625.8 170.8 627.0 173.0 C628.2 175.2 629.2 176.8 631.0 179.0 C632.8 181.2 635.7 183.8 638.0 186.0 C640.3 188.2 643.0 189.5 645.0 192.0 C647.0 194.5 648.5 198.2 650.0 201.0 C651.5 203.8 652.3 206.3 654.0 209.0 C655.7 211.7 658.0 214.7 660.0 217.0 C662.0 219.3 663.8 221.5 666.0 223.0 C668.2 224.5 670.5 226.0 673.0 226.0 C675.5 226.0 679.2 222.3 681.0 223.0 C682.8 223.7 683.0 227.8 684.0 230.0 C685.0 232.2 686.2 233.7 687.0 236.0 C687.8 238.3 688.5 241.3 689.0 244.0 C689.5 246.7 689.7 249.5 690.0 252.0 C690.3 254.5 690.3 256.5 691.0 259.0 C691.7 261.5 693.2 264.5 694.0 267.0 C694.8 269.5 696.5 271.5 696.0 274.0 C695.5 276.5 692.0 279.7 691.0 282.0 C690.0 284.3 689.2 286.5 690.0 288.0 C690.8 289.5 694.3 289.7 696.0 291.0 C697.7 292.3 698.8 294.3 700.0 296.0 C701.2 297.7 702.0 299.5 703.0 301.0 C704.0 302.5 704.8 303.5 706.0 305.0 C707.2 306.5 708.5 308.8 710.0 310.0 C711.5 311.2 713.5 312.7 715.0 312.0 C716.5 311.3 717.8 308.0 719.0 306.0 C720.2 304.0 720.8 302.2 722.0 300.0 C723.2 297.8 724.7 294.8 726.0 293.0 C727.3 291.2 728.3 289.2 730.0 289.0 C731.7 288.8 734.0 290.5 736.0 292.0 C738.0 293.5 740.0 296.7 742.0 298.0 C744.0 299.3 746.0 299.7 748.0 300.0 C750.0 300.3 753.4 301.7 753.8 299.6 C754.2 297.5 751.6 291.4 750.3 287.4 C749.0 283.3 747.7 279.3 746.2 275.3 C744.7 271.4 743.1 267.4 741.4 263.5 C739.7 259.7 737.9 255.8 736.0 252.0 C734.1 248.2 732.1 244.5 730.0 240.8 C727.9 237.1 725.7 233.5 723.5 229.9 C721.2 226.3 718.8 222.8 716.3 219.4 C713.9 215.9 711.3 212.5 708.6 209.2 C706.0 205.9 703.3 202.7 700.4 199.5 C697.6 196.3 694.7 193.2 691.7 190.2 C688.8 187.2 685.7 184.3 682.6 181.4 C679.4 178.6 676.2 175.8 672.9 173.1 C669.7 170.4 666.3 167.8 662.9 165.3 C659.5 162.8 656.0 160.4 652.4 158.0 C648.9 155.7 645.3 153.5 641.6 151.4 C637.9 149.2 633.4 142.8 630.4 145.2 C627.5 147.7 624.6 161.4 624.0 166.0Z" fill="#2e4519" />
<path d="M694.0 321.0 C693.3 322.8 694.7 325.7 695.0 328.0 C695.3 330.3 695.3 332.5 696.0 335.0 C696.7 337.5 698.0 340.7 699.0 343.0 C700.0 345.3 700.8 347.2 702.0 349.0 C703.2 350.8 704.7 352.7 706.0 354.0 C707.3 355.3 708.3 356.5 710.0 357.0 C711.7 357.5 714.2 357.2 716.0 357.0 C717.8 356.8 719.8 357.7 721.0 356.0 C722.2 354.3 722.5 350.0 723.0 347.0 C723.5 344.0 724.3 340.8 724.0 338.0 C723.7 335.2 721.8 332.7 721.0 330.0 C720.2 327.3 719.8 324.5 719.0 322.0 C718.2 319.5 717.3 316.7 716.0 315.0 C714.7 313.3 713.0 312.2 711.0 312.0 C709.0 311.8 706.0 313.2 704.0 314.0 C702.0 314.8 700.7 315.8 699.0 317.0 C697.3 318.2 694.7 319.2 694.0 321.0Z" fill="#766a3c" />
<path d="M653.0 237.0 C653.5 235.8 656.5 235.3 658.0 236.0 C659.5 236.7 660.3 239.3 662.0 241.0 C663.7 242.7 666.2 244.5 668.0 246.0 C669.8 247.5 671.5 248.5 673.0 250.0 C674.5 251.5 675.5 253.5 677.0 255.0 C678.5 256.5 680.5 257.7 682.0 259.0 C683.5 260.3 685.0 261.5 686.0 263.0 C687.0 264.5 688.0 266.5 688.0 268.0 C688.0 269.5 687.3 271.5 686.0 272.0 C684.7 272.5 681.8 271.7 680.0 271.0 C678.2 270.3 676.3 269.3 675.0 268.0 C673.7 266.7 673.2 264.5 672.0 263.0 C670.8 261.5 669.3 260.5 668.0 259.0 C666.7 257.5 665.5 255.7 664.0 254.0 C662.5 252.3 660.5 250.8 659.0 249.0 C657.5 247.2 656.0 245.0 655.0 243.0 C654.0 241.0 652.5 238.2 653.0 237.0Z" fill="#38521f" />
<path d="M660.0 258.0 C661.0 256.7 663.5 255.8 665.0 256.0 C666.5 256.2 668.0 257.5 669.0 259.0 C670.0 260.5 670.5 262.8 671.0 265.0 C671.5 267.2 672.3 269.8 672.0 272.0 C671.7 274.2 670.3 277.2 669.0 278.0 C667.7 278.8 665.3 278.2 664.0 277.0 C662.7 275.8 661.8 273.2 661.0 271.0 C660.2 268.8 659.2 266.2 659.0 264.0 C658.8 261.8 659.0 259.3 660.0 258.0Z" fill="#3a5a20" />
<path d="M589.0 215.0 C589.7 213.5 591.3 211.8 593.0 211.0 C594.7 210.2 596.8 210.0 599.0 210.0 C601.2 210.0 604.0 210.2 606.0 211.0 C608.0 211.8 610.2 213.3 611.0 215.0 C611.8 216.7 611.8 219.3 611.0 221.0 C610.2 222.7 608.0 224.2 606.0 225.0 C604.0 225.8 601.2 226.3 599.0 226.0 C596.8 225.7 594.7 224.0 593.0 223.0 C591.3 222.0 589.7 221.3 589.0 220.0 C588.3 218.7 588.3 216.5 589.0 215.0Z" fill="#5a6436" />
<path d="M444.0 178.0 C445.7 177.7 448.0 179.2 450.0 180.0 C452.0 180.8 453.5 182.3 456.0 183.0 C458.5 183.7 462.2 183.7 465.0 184.0 C467.8 184.3 471.2 183.5 473.0 185.0 C474.8 186.5 475.3 190.5 476.0 193.0 C476.7 195.5 476.0 197.5 477.0 200.0 C478.0 202.5 480.5 205.5 482.0 208.0 C483.5 210.5 485.0 212.5 486.0 215.0 C487.0 217.5 488.3 220.5 488.0 223.0 C487.7 225.5 486.0 228.0 484.0 230.0 C482.0 232.0 478.3 233.5 476.0 235.0 C473.7 236.5 472.2 238.2 470.0 239.0 C467.8 239.8 465.0 241.0 463.0 240.0 C461.0 239.0 459.7 235.2 458.0 233.0 C456.3 230.8 455.0 229.3 453.0 227.0 C451.0 224.7 446.5 221.2 446.0 219.0 C445.5 216.8 448.2 215.3 450.0 214.0 C451.8 212.7 455.2 212.5 457.0 211.0 C458.8 209.5 460.2 207.0 461.0 205.0 C461.8 203.0 462.7 200.8 462.0 199.0 C461.3 197.2 459.0 195.0 457.0 194.0 C455.0 193.0 452.3 192.7 450.0 193.0 C447.7 193.3 445.0 195.7 443.0 196.0 C441.0 196.3 439.0 196.3 438.0 195.0 C437.0 193.7 436.7 190.2 437.0 188.0 C437.3 185.8 438.8 183.7 440.0 182.0 C441.2 180.3 442.3 178.3 444.0 178.0Z" fill="#545438" />
<path d="M352.0 459.0 C352.7 458.5 355.2 459.7 357.0 461.0 C358.8 462.3 361.0 464.8 363.0 467.0 C365.0 469.2 367.0 471.7 369.0 474.0 C371.0 476.3 373.0 478.8 375.0 481.0 C377.0 483.2 379.7 485.5 381.0 487.0 C382.3 488.5 383.5 489.5 383.0 490.0 C382.5 490.5 380.0 491.0 378.0 490.0 C376.0 489.0 373.3 486.2 371.0 484.0 C368.7 481.8 366.2 479.3 364.0 477.0 C361.8 474.7 359.8 472.2 358.0 470.0 C356.2 467.8 354.0 465.8 353.0 464.0 C352.0 462.2 351.3 459.5 352.0 459.0Z" fill="#30491c" />
<path d="M391.0 497.0 C391.5 495.8 394.8 495.5 397.0 496.0 C399.2 496.5 401.8 498.5 404.0 500.0 C406.2 501.5 409.3 503.7 410.0 505.0 C410.7 506.3 409.5 507.7 408.0 508.0 C406.5 508.3 403.3 507.8 401.0 507.0 C398.7 506.2 395.7 504.7 394.0 503.0 C392.3 501.3 390.5 498.2 391.0 497.0Z" fill="#30491c" />
</g>
</g>
</g>
<g clip-path="url(#gc)">
<defs><clipPath id="nac"><path d="M432.0 147.0 C430.9 150.2 426.7 152.3 424.0 155.0 C421.3 157.7 417.7 160.2 416.0 163.0 C414.3 165.8 413.3 169.7 414.0 172.0 C414.7 174.3 417.3 176.8 420.0 177.0 C422.7 177.2 427.0 174.0 430.0 173.0 C433.0 172.0 435.3 170.5 438.0 171.0 C440.7 171.5 445.0 173.5 446.0 176.0 C447.0 178.5 445.5 182.7 444.0 186.0 C442.5 189.3 439.3 192.8 437.0 196.0 C434.7 199.2 432.2 202.2 430.0 205.0 C427.8 207.8 427.0 210.7 424.0 213.0 C421.0 215.3 416.0 217.5 412.0 219.0 C408.0 220.5 403.3 220.0 400.0 222.0 C396.7 224.0 393.8 227.2 392.0 231.0 C390.2 234.8 388.7 240.3 389.0 245.0 C389.3 249.7 392.2 255.0 394.0 259.0 C395.8 263.0 398.7 265.8 400.0 269.0 C401.3 272.2 401.8 274.7 402.0 278.0 C402.2 281.3 400.3 286.7 401.0 289.0 C401.7 291.3 404.5 293.8 406.0 292.0 C407.5 290.2 407.5 281.3 410.0 278.0 C412.5 274.7 418.2 274.5 421.0 272.0 C423.8 269.5 426.2 266.5 427.0 263.0 C427.8 259.5 425.3 254.2 426.0 251.0 C426.7 247.8 430.3 246.5 431.0 244.0 C431.7 241.5 429.5 237.3 430.0 236.0 C430.5 234.7 431.8 235.7 434.0 236.0 C436.2 236.3 440.0 237.2 443.0 238.0 C446.0 238.8 449.8 239.7 452.0 241.0 C454.2 242.3 454.8 243.2 456.0 246.0 C457.2 248.8 457.8 257.0 459.0 258.0 C460.2 259.0 461.8 253.8 463.0 252.0 C464.2 250.2 464.7 246.8 466.0 247.0 C467.3 247.2 469.3 248.8 471.0 253.0 C472.7 257.2 474.2 266.3 476.0 272.0 C477.8 277.7 479.7 283.2 482.0 287.0 C484.3 290.8 487.7 292.7 490.0 295.0 C492.3 297.3 493.3 300.3 496.0 301.0 C498.7 301.7 502.7 298.2 506.0 299.0 C509.3 299.8 513.7 303.2 516.0 306.0 C518.3 308.8 518.8 312.0 520.0 316.0 C521.2 320.0 524.0 326.2 523.0 330.0 C522.0 333.8 517.8 337.2 514.0 339.0 C510.2 340.8 504.3 340.3 500.0 341.0 C495.7 341.7 492.0 343.7 488.0 343.0 C484.0 342.3 478.8 339.2 476.0 337.0 C473.2 334.8 473.8 331.0 471.0 330.0 C468.2 329.0 462.2 329.2 459.0 331.0 C455.8 332.8 454.8 337.5 452.0 341.0 C449.2 344.5 445.7 349.3 442.0 352.0 C438.3 354.7 433.8 355.7 430.0 357.0 C426.2 358.3 421.8 358.2 419.0 360.0 C416.2 361.8 416.2 366.0 413.0 368.0 C409.8 370.0 404.0 369.3 400.0 372.0 C396.0 374.7 391.3 380.3 389.0 384.0 C386.7 387.7 386.8 391.2 386.0 394.0 C385.2 396.8 386.3 398.8 384.0 401.0 C381.7 403.2 376.3 405.0 372.0 407.0 C367.7 409.0 360.0 409.2 358.0 413.0 C356.0 416.8 359.8 424.7 360.0 430.0 C360.2 435.3 359.7 441.8 359.0 445.0 C358.3 448.2 357.2 449.8 356.0 449.0 C354.8 448.2 353.2 443.8 352.0 440.0 C350.8 436.2 349.8 430.2 349.0 426.0 C348.2 421.8 348.3 417.5 347.0 415.0 C345.7 412.5 343.8 412.7 341.0 411.0 C338.2 409.3 333.5 406.8 330.0 405.0 C326.5 403.2 322.7 402.2 320.0 400.0 C317.3 397.8 316.2 393.5 314.0 392.0 C311.8 390.5 308.3 389.7 307.0 391.0 C305.7 392.3 306.0 396.0 306.0 400.0 C306.0 404.0 306.7 410.0 307.0 415.0 C307.3 420.0 306.8 425.8 308.0 430.0 C309.2 434.2 312.2 437.5 314.0 440.0 C315.8 442.5 317.5 444.5 319.0 445.0 C320.5 445.5 320.8 442.8 323.0 443.0 C325.2 443.2 330.3 443.8 332.0 446.0 C333.7 448.2 333.8 453.3 333.0 456.0 C332.2 458.7 329.0 460.8 327.0 462.0 C325.0 463.2 320.5 461.7 321.0 463.0 C321.5 464.3 326.8 466.8 330.0 470.0 C333.2 473.2 337.2 478.3 340.0 482.0 C342.8 485.7 344.8 488.7 347.0 492.0 C349.2 495.3 351.0 498.8 353.0 502.0 C355.0 505.2 356.7 508.0 359.0 511.0 C361.3 514.0 364.2 517.3 367.0 520.0 C369.8 522.7 375.2 524.7 376.0 527.0 C376.8 529.3 374.3 533.8 372.0 534.0 C369.7 534.2 365.2 530.7 362.0 528.0 C358.8 525.3 355.7 521.5 353.0 518.0 C350.3 514.5 348.3 510.8 346.0 507.0 C343.7 503.2 341.3 498.8 339.0 495.0 C336.7 491.2 334.7 487.7 332.0 484.0 C329.3 480.3 326.0 477.0 323.0 473.0 C320.0 469.0 316.8 464.5 314.0 460.0 C311.2 455.5 308.3 451.0 306.0 446.0 C303.7 441.0 301.7 435.7 300.0 430.0 C298.3 424.3 297.2 418.3 296.0 412.0 C294.8 405.7 295.7 396.4 293.0 392.0 C290.3 387.6 282.2 388.4 279.9 385.5 C277.5 382.7 279.2 378.6 279.0 375.2 C278.8 371.7 278.6 368.2 278.5 364.7 C278.5 361.2 278.5 357.8 278.6 354.3 C278.6 350.8 278.8 347.3 279.0 343.9 C279.3 340.4 279.6 336.9 280.0 333.5 C280.3 330.0 280.8 326.6 281.3 323.1 C281.9 319.7 282.5 316.3 283.1 312.9 C283.8 309.4 284.6 306.0 285.4 302.7 C286.2 299.3 287.1 295.9 288.1 292.6 C289.1 289.2 290.1 285.9 291.2 282.6 C292.3 279.3 293.5 276.1 294.8 272.8 C296.0 269.6 297.4 266.4 298.8 263.2 C300.2 260.0 301.6 256.8 303.1 253.7 C304.7 250.6 306.3 247.5 307.9 244.4 C309.6 241.4 311.3 238.4 313.1 235.4 C314.9 232.4 316.8 229.5 318.7 226.6 C320.6 223.7 322.6 220.8 324.7 218.0 C326.7 215.2 328.8 212.4 331.0 209.7 C333.1 207.0 335.4 204.3 337.6 201.7 C339.9 199.0 342.3 196.5 344.7 193.9 C347.0 191.4 349.5 188.9 352.0 186.5 C354.5 184.1 357.0 181.7 359.6 179.4 C362.2 177.1 364.9 174.9 367.6 172.7 C370.3 170.5 373.0 168.3 375.8 166.3 C378.6 164.2 381.5 162.2 384.3 160.2 C387.2 158.3 390.1 156.4 393.1 154.5 C396.0 152.7 399.0 150.9 402.1 149.2 C405.1 147.6 408.2 145.9 411.3 144.4 C414.4 142.8 417.5 141.3 420.7 139.9 C423.9 138.4 428.4 134.6 430.3 135.8 C432.2 137.0 433.1 143.8 432.0 147.0Z" fill="#000" /></clipPath><clipPath id="afc"><path d="M710.0 359.0 C709.5 356.7 714.0 353.0 716.0 350.0 C718.0 347.0 720.2 343.7 722.0 341.0 C723.8 338.3 725.2 336.7 727.0 334.0 C728.8 331.3 731.2 327.5 733.0 325.0 C734.8 322.5 735.8 319.5 738.0 319.0 C740.2 318.5 743.7 320.8 746.0 322.0 C748.3 323.2 749.8 325.0 752.0 326.0 C754.2 327.0 757.9 325.8 759.4 328.1 C760.8 330.4 760.3 336.0 760.7 339.9 C761.0 343.9 761.2 347.9 761.4 351.8 C761.5 355.8 761.5 359.8 761.5 363.7 C761.4 367.7 761.2 371.7 761.0 375.6 C760.7 379.6 760.4 383.6 759.9 387.5 C759.5 391.5 758.9 395.4 758.3 399.3 C757.6 403.2 756.9 407.1 756.0 411.0 C755.2 414.9 754.3 418.8 753.2 422.6 C752.2 426.4 751.1 430.3 749.9 434.0 C748.7 437.8 747.3 441.6 745.9 445.3 C744.5 449.0 743.0 452.7 741.5 456.3 C739.9 460.0 738.2 463.6 736.4 467.1 C734.7 470.7 732.8 474.2 730.9 477.7 C729.0 481.1 726.9 484.6 724.8 487.9 C722.7 491.3 720.5 494.6 718.3 497.9 C716.0 501.1 714.3 507.1 711.2 507.5 C708.2 507.8 703.2 501.9 700.0 500.0 C696.8 498.1 693.3 497.8 692.0 496.0 C690.7 494.2 691.3 491.5 692.0 489.0 C692.7 486.5 695.2 483.5 696.0 481.0 C696.8 478.5 697.0 476.5 697.0 474.0 C697.0 471.5 696.3 468.5 696.0 466.0 C695.7 463.5 694.7 462.0 695.0 459.0 C695.3 456.0 697.2 451.0 698.0 448.0 C698.8 445.0 699.0 444.7 700.0 441.0 C701.0 437.3 702.3 430.3 704.0 426.0 C705.7 421.7 708.2 419.0 710.0 415.0 C711.8 411.0 714.5 406.5 715.0 402.0 C715.5 397.5 712.8 391.7 713.0 388.0 C713.2 384.3 715.3 382.5 716.0 380.0 C716.7 377.5 716.5 375.7 717.0 373.0 C717.5 370.3 720.2 366.3 719.0 364.0 C717.8 361.7 710.5 361.3 710.0 359.0Z" fill="#000" /></clipPath><clipPath id="euc"><path d="M624.0 166.0 C623.4 170.6 625.8 170.8 627.0 173.0 C628.2 175.2 629.2 176.8 631.0 179.0 C632.8 181.2 635.7 183.8 638.0 186.0 C640.3 188.2 643.0 189.5 645.0 192.0 C647.0 194.5 648.5 198.2 650.0 201.0 C651.5 203.8 652.3 206.3 654.0 209.0 C655.7 211.7 658.0 214.7 660.0 217.0 C662.0 219.3 663.8 221.5 666.0 223.0 C668.2 224.5 670.5 226.0 673.0 226.0 C675.5 226.0 679.2 222.3 681.0 223.0 C682.8 223.7 683.0 227.8 684.0 230.0 C685.0 232.2 686.2 233.7 687.0 236.0 C687.8 238.3 688.5 241.3 689.0 244.0 C689.5 246.7 689.7 249.5 690.0 252.0 C690.3 254.5 690.3 256.5 691.0 259.0 C691.7 261.5 693.2 264.5 694.0 267.0 C694.8 269.5 696.5 271.5 696.0 274.0 C695.5 276.5 692.0 279.7 691.0 282.0 C690.0 284.3 689.2 286.5 690.0 288.0 C690.8 289.5 694.3 289.7 696.0 291.0 C697.7 292.3 698.8 294.3 700.0 296.0 C701.2 297.7 702.0 299.5 703.0 301.0 C704.0 302.5 704.8 303.5 706.0 305.0 C707.2 306.5 708.5 308.8 710.0 310.0 C711.5 311.2 713.5 312.7 715.0 312.0 C716.5 311.3 717.8 308.0 719.0 306.0 C720.2 304.0 720.8 302.2 722.0 300.0 C723.2 297.8 724.7 294.8 726.0 293.0 C727.3 291.2 728.3 289.2 730.0 289.0 C731.7 288.8 734.0 290.5 736.0 292.0 C738.0 293.5 740.0 296.7 742.0 298.0 C744.0 299.3 746.0 299.7 748.0 300.0 C750.0 300.3 753.4 301.7 753.8 299.6 C754.2 297.5 751.6 291.4 750.3 287.4 C749.0 283.3 747.7 279.3 746.2 275.3 C744.7 271.4 743.1 267.4 741.4 263.5 C739.7 259.7 737.9 255.8 736.0 252.0 C734.1 248.2 732.1 244.5 730.0 240.8 C727.9 237.1 725.7 233.5 723.5 229.9 C721.2 226.3 718.8 222.8 716.3 219.4 C713.9 215.9 711.3 212.5 708.6 209.2 C706.0 205.9 703.3 202.7 700.4 199.5 C697.6 196.3 694.7 193.2 691.7 190.2 C688.8 187.2 685.7 184.3 682.6 181.4 C679.4 178.6 676.2 175.8 672.9 173.1 C669.7 170.4 666.3 167.8 662.9 165.3 C659.5 162.8 656.0 160.4 652.4 158.0 C648.9 155.7 645.3 153.5 641.6 151.4 C637.9 149.2 633.4 142.8 630.4 145.2 C627.5 147.7 624.6 161.4 624.0 166.0Z" fill="#000" /><path d="M694.0 321.0 C693.3 322.8 694.7 325.7 695.0 328.0 C695.3 330.3 695.3 332.5 696.0 335.0 C696.7 337.5 698.0 340.7 699.0 343.0 C700.0 345.3 700.8 347.2 702.0 349.0 C703.2 350.8 704.7 352.7 706.0 354.0 C707.3 355.3 708.3 356.5 710.0 357.0 C711.7 357.5 714.2 357.2 716.0 357.0 C717.8 356.8 719.8 357.7 721.0 356.0 C722.2 354.3 722.5 350.0 723.0 347.0 C723.5 344.0 724.3 340.8 724.0 338.0 C723.7 335.2 721.8 332.7 721.0 330.0 C720.2 327.3 719.8 324.5 719.0 322.0 C718.2 319.5 717.3 316.7 716.0 315.0 C714.7 313.3 713.0 312.2 711.0 312.0 C709.0 311.8 706.0 313.2 704.0 314.0 C702.0 314.8 700.7 315.8 699.0 317.0 C697.3 318.2 694.7 319.2 694.0 321.0Z" fill="#000" /></clipPath><clipPath id="sac"><path d="M377.0 528.0 C380.1 524.1 384.5 525.3 388.0 525.0 C391.5 524.7 394.8 524.7 398.0 526.0 C401.2 527.3 404.2 530.7 407.0 533.0 C409.8 535.3 411.5 538.0 415.0 540.0 C418.5 542.0 423.8 543.5 428.0 545.0 C432.2 546.5 435.8 547.3 440.0 549.0 C444.2 550.7 448.5 553.0 453.0 555.0 C457.5 557.0 462.5 559.2 467.0 561.0 C471.5 562.8 475.5 564.5 480.0 566.0 C484.5 567.5 489.5 568.7 494.0 570.0 C498.5 571.3 502.8 572.7 507.0 574.0 C511.2 575.3 513.8 576.5 519.0 578.0 C524.2 579.5 532.5 582.0 538.0 583.0 C543.5 584.0 547.2 584.0 552.0 584.0 C556.8 584.0 562.3 583.3 567.0 583.0 C571.7 582.7 575.8 582.7 580.0 582.0 C584.2 581.3 588.5 578.1 592.0 579.0 C595.5 579.9 601.4 585.5 600.9 587.5 C600.4 589.6 593.2 590.2 589.2 591.4 C585.3 592.5 581.4 593.6 577.4 594.6 C573.4 595.6 569.4 596.4 565.4 597.2 C561.4 598.0 557.4 598.6 553.3 599.2 C549.3 599.8 545.2 600.2 541.1 600.6 C537.0 600.9 532.9 601.2 528.9 601.3 C524.8 601.5 520.7 601.5 516.6 601.5 C512.5 601.4 508.4 601.3 504.3 601.0 C500.3 600.7 496.2 600.4 492.1 599.9 C488.0 599.4 484.0 598.8 480.0 598.2 C475.9 597.5 471.9 596.7 467.9 595.8 C463.9 594.9 459.9 593.9 456.0 592.9 C452.1 591.8 448.1 590.6 444.3 589.3 C440.4 588.0 436.5 586.6 432.7 585.2 C428.9 583.7 425.1 582.1 421.4 580.4 C417.6 578.8 414.0 577.0 410.3 575.2 C406.7 573.3 403.1 571.3 399.5 569.3 C396.0 567.3 392.5 565.1 389.0 562.9 C385.6 560.7 382.2 558.4 378.9 556.0 C375.6 553.6 369.5 553.2 369.1 548.6 C368.8 543.9 373.9 531.9 377.0 528.0Z" fill="#000" /></clipPath></defs>
<g clip-path="url(#lc)">
<g clip-path="url(#nac)">
<rect x="285" y="140" width="245" height="400" fill="#fff" filter="url(#ltex)" opacity="0.6"/>
<rect x="285" y="140" width="245" height="400" fill="#fff" filter="url(#dtex)" opacity="0.6"/>
<g filter="url(#b4)">
<path d="M280.0 235.0 C288.0 225.0 309.7 235.5 318.0 240.0 C326.3 244.5 328.0 253.3 330.0 262.0 C332.0 270.7 331.2 283.2 330.0 292.0 C328.8 300.8 325.7 307.3 323.0 315.0 C320.3 322.7 316.3 330.5 314.0 338.0 C311.7 345.5 310.5 353.8 309.0 360.0 C307.5 366.2 306.3 369.7 305.0 375.0 C303.7 380.3 302.0 384.5 301.0 392.0 C300.0 399.5 298.5 412.0 299.0 420.0 C299.5 428.0 305.5 435.0 304.0 440.0 C302.5 445.0 295.7 460.0 290.0 450.0 C284.3 440.0 273.3 405.0 270.0 380.0 C266.7 355.0 268.3 324.2 270.0 300.0 C271.7 275.8 272.0 245.0 280.0 235.0Z" fill="#8a7850" opacity="0.95"/>
<ellipse cx="316.0" cy="300.0" rx="6.0" ry="36.0" fill="#a8966a" transform="rotate(12 316 300)" opacity="0.7"/>
<ellipse cx="400.0" cy="195.0" rx="22.0" ry="16.0" fill="#6e6a48" transform="rotate(-30 400 195)" opacity="0.8"/>
<ellipse cx="450.0" cy="272.0" rx="28.0" ry="26.0" fill="#2c3019" opacity="0.75"/>
<ellipse cx="340.0" cy="205.0" rx="30.0" ry="12.0" fill="#44582a" transform="rotate(-48 340 205)" opacity="0.8"/>
<path d="M309.0 283.2 C310.9 282.6 312.8 273.5 314.9 268.7 C317.0 263.9 319.3 259.2 321.8 254.6 C324.2 250.0 326.8 245.5 329.6 241.0 C332.4 236.6 335.3 232.3 338.4 228.0 C341.4 223.8 344.7 219.7 348.0 215.7 C351.4 211.7 354.9 207.8 358.5 204.0 C362.1 200.3 365.9 196.7 369.8 193.2 C373.7 189.7 377.7 186.3 381.8 183.1 C385.9 179.9 390.1 176.8 394.5 173.9 C398.8 171.0 403.2 168.2 407.7 165.6 C412.3 163.0 416.9 160.5 421.6 158.2 C426.3 155.9 432.8 154.8 435.9 151.8 C439.0 148.9 442.0 141.4 440.1 140.6 C438.3 139.7 430.0 144.5 425.0 146.7 C420.1 148.9 415.2 151.3 410.4 153.8 C405.6 156.4 400.9 159.1 396.3 162.0 C391.7 164.9 387.1 167.9 382.8 171.1 C378.4 174.3 374.1 177.6 369.9 181.1 C365.7 184.6 361.7 188.3 357.8 192.0 C353.9 195.8 350.1 199.7 346.5 203.8 C342.8 207.8 339.3 212.0 336.0 216.2 C332.7 220.5 329.5 224.9 326.4 229.4 C323.4 233.9 320.5 238.5 317.8 243.2 C315.1 248.0 312.5 252.8 310.1 257.6 C307.8 262.5 303.7 268.3 303.5 272.5 C303.3 276.8 307.1 283.9 309.0 283.2Z" fill="#6a7658" opacity="0.75"/>
<ellipse cx="420.0" cy="330.0" rx="60.0" ry="30.0" fill="#2c481c" opacity="0.5"/>
<ellipse cx="326.0" cy="453.0" rx="7.0" ry="8.0" fill="#34541c" opacity="0.8"/>
</g>
</g>
<g filter="url(#rough)"><path d="M445.7 157.6 C445.7 156.9 448.8 155.6 451.5 155.2 C454.2 154.9 460.4 155.1 461.9 155.7 C463.5 156.4 462.7 158.4 461.0 159.1 C459.2 159.7 454.0 159.8 451.5 159.5 C448.9 159.3 445.7 158.3 445.7 157.6Z" fill="#f2f2f2" opacity="0.92"/><path d="M465.8 158.6 C466.1 157.5 468.3 156.0 469.6 155.7 C470.8 155.4 472.8 155.7 473.4 156.7 C473.9 157.6 473.9 160.5 472.9 161.4 C472.0 162.4 468.9 162.9 467.7 162.4 C466.5 161.9 465.4 159.7 465.8 158.6Z" fill="#f2f2f2" opacity="0.92"/><path d="M477.2 159.5 C477.7 158.3 480.4 155.9 482.0 155.2 C483.6 154.6 486.1 154.7 486.7 155.7 C487.4 156.8 487.0 160.2 485.8 161.4 C484.5 162.6 480.5 163.2 479.1 162.9 C477.7 162.6 476.7 160.8 477.2 159.5Z" fill="#f2f2f2" opacity="0.92"/><path d="M487.2 155.7 C487.7 154.4 492.1 153.2 494.4 152.9 C496.7 152.5 499.9 152.7 501.0 153.8 C502.1 154.9 502.6 158.4 501.0 159.5 C499.4 160.6 493.8 161.1 491.5 160.5 C489.2 159.9 486.7 157.0 487.2 155.7Z" fill="#f2f2f2" opacity="0.92"/><path d="M443.8 163.3 C444.1 162.4 446.4 160.8 447.6 160.5 C448.9 160.2 451.0 160.6 451.5 161.4 C451.9 162.3 451.5 164.9 450.5 165.7 C449.6 166.5 446.9 166.6 445.7 166.2 C444.6 165.8 443.5 164.3 443.8 163.3Z" fill="#f2f2f2" opacity="0.92"/><path d="M454.3 165.3 C455.0 164.1 458.3 162.6 460.0 162.4 C461.8 162.2 464.3 163.2 464.8 164.3 C465.3 165.4 464.3 168.3 462.9 169.1 C461.5 169.9 457.7 169.7 456.2 169.1 C454.8 168.4 453.7 166.4 454.3 165.3Z" fill="#f2f2f2" opacity="0.92"/><path d="M465.3 169.1 C465.8 167.5 468.9 165.6 470.5 165.3 C472.2 164.9 474.7 165.7 475.3 167.2 C475.9 168.6 475.6 172.6 474.3 173.8 C473.1 175.1 469.2 175.6 467.7 174.8 C466.2 174.0 464.8 170.7 465.3 169.1Z" fill="#f2f2f2" opacity="0.92"/><path d="M477.2 165.3 C477.7 164.1 480.4 162.6 482.0 162.4 C483.6 162.2 486.3 163.2 486.7 164.3 C487.2 165.4 486.1 168.3 484.8 169.1 C483.6 169.9 480.4 169.7 479.1 169.1 C477.8 168.4 476.7 166.4 477.2 165.3Z" fill="#f2f2f2" opacity="0.92"/><path d="M492.4 169.1 C492.8 167.6 494.8 166.5 496.3 166.2 C497.7 165.9 500.2 165.9 501.0 167.2 C501.8 168.4 502.1 172.6 501.0 173.8 C499.9 175.1 495.8 175.6 494.4 174.8 C492.9 174.0 492.1 170.5 492.4 169.1Z" fill="#f2f2f2" opacity="0.92"/><path d="M422.9 173.8 C423.7 170.2 425.9 167.3 427.6 166.2 C429.4 165.1 432.6 165.1 433.3 167.2 C434.1 169.2 433.2 174.9 432.4 178.6 C431.6 182.3 430.2 187.5 428.6 189.1 C427.0 190.7 423.8 190.7 422.9 188.1 C421.9 185.6 422.1 177.5 422.9 173.8Z" fill="#f2f2f2" opacity="0.85"/><path d="M434.3 174.8 C434.8 172.7 437.5 169.7 439.1 169.1 C440.7 168.4 443.4 169.1 443.8 171.0 C444.3 172.9 443.2 178.8 441.9 180.5 C440.7 182.3 437.5 182.4 436.2 181.5 C434.9 180.5 433.8 176.9 434.3 174.8Z" fill="#f2f2f2" opacity="0.9"/><path d="M447.6 183.4 C448.4 181.3 451.5 178.6 454.3 177.6 C457.2 176.7 462.9 176.2 464.8 177.6 C466.7 179.1 466.9 183.8 465.8 186.2 C464.6 188.6 460.8 191.3 458.1 191.9 C455.4 192.6 451.3 191.5 449.6 190.0 C447.8 188.6 446.9 185.4 447.6 183.4Z" fill="#f2f2f2" opacity="0.9"/><path d="M466.7 184.3 C467.7 181.1 471.3 179.9 473.4 180.5 C475.4 181.1 478.2 184.3 479.1 188.1 C480.1 191.9 480.1 199.7 479.1 203.4 C478.2 207.0 475.3 210.6 473.4 210.0 C471.5 209.3 468.8 203.8 467.7 199.6 C466.6 195.3 465.8 187.5 466.7 184.3Z" fill="#e4e2d6" opacity="0.7"/><path d="M420.0 192.9 C421.3 189.7 425.7 190.2 427.6 191.0 C429.5 191.8 431.1 194.5 431.4 197.7 C431.8 200.8 431.4 207.9 429.5 210.0 C427.6 212.0 421.6 212.8 420.0 210.0 C418.4 207.1 418.7 196.1 420.0 192.9Z" fill="#dcdcd2" opacity="0.6"/><path d="M434.3 194.8 C435.7 192.4 441.4 191.5 443.8 191.9 C446.2 192.4 448.4 195.1 448.6 197.7 C448.8 200.2 447.0 205.8 444.8 207.2 C442.6 208.6 437.0 208.3 435.3 206.2 C433.5 204.2 432.9 197.2 434.3 194.8Z" fill="#e8e8e0" opacity="0.75"/><path d="M405.7 190.0 C406.7 186.5 411.7 186.2 414.3 186.2 C416.8 186.2 420.3 187.2 421.0 190.0 C421.6 192.9 420.2 200.5 418.1 203.4 C416.0 206.2 410.6 209.4 408.6 207.2 C406.5 205.0 404.7 193.5 405.7 190.0Z" fill="#d4d4c8" opacity="0.45"/><path d="M425.7 212.0 C426.8 209.6 432.2 209.9 434.3 211.0 C436.4 212.1 438.1 216.1 438.1 218.6 C438.1 221.2 436.0 225.2 434.3 226.3 C432.6 227.4 429.1 227.7 427.6 225.3 C426.2 222.9 424.6 214.3 425.7 212.0Z" fill="#f2f2f2" opacity="0.8"/><path d="M473.4 212.9 C474.3 210.7 479.3 210.1 481.0 211.0 C482.8 212.0 483.9 216.1 483.9 218.6 C483.9 221.2 482.4 225.3 481.0 226.3 C479.6 227.2 476.6 226.6 475.3 224.4 C474.0 222.1 472.4 215.1 473.4 212.9Z" fill="#e0e0d8" opacity="0.6"/><ellipse cx="444.0" cy="240.0" rx="10.0" ry="7.0" fill="#dcdcd4" transform="rotate(10 444 240)" opacity="0.8"/><ellipse cx="468.0" cy="264.0" rx="4.0" ry="14.0" fill="#d6d2c4" transform="rotate(-12 468 264)" opacity="0.75"/><ellipse cx="452.0" cy="252.0" rx="6.0" ry="4.0" fill="#d0ccc0" opacity="0.5"/></g>
<g filter="url(#snowf)"><path d="M416.0 166.0 C418.7 161.3 422.3 158.3 428.0 156.0 C433.7 153.7 441.3 152.8 450.0 152.0 C458.7 151.2 471.0 150.8 480.0 151.0 C489.0 151.2 499.3 151.5 504.0 153.0 C508.7 154.5 508.7 157.5 508.0 160.0 C507.3 162.5 503.0 165.3 500.0 168.0 C497.0 170.7 492.7 172.3 490.0 176.0 C487.3 179.7 484.3 185.0 484.0 190.0 C483.7 195.0 487.0 200.3 488.0 206.0 C489.0 211.7 491.3 219.0 490.0 224.0 C488.7 229.0 484.0 233.3 480.0 236.0 C476.0 238.7 470.7 240.7 466.0 240.0 C461.3 239.3 456.3 235.0 452.0 232.0 C447.7 229.0 443.7 225.0 440.0 222.0 C436.3 219.0 434.3 214.7 430.0 214.0 C425.7 213.3 418.7 218.0 414.0 218.0 C409.3 218.0 403.7 217.3 402.0 214.0 C400.3 210.7 402.3 203.0 404.0 198.0 C405.7 193.0 410.0 189.3 412.0 184.0 C414.0 178.7 413.3 170.7 416.0 166.0Z" fill="#fff" /></g>
<g clip-path="url(#afc)"><g filter="url(#b2)">
<ellipse cx="742.0" cy="335.0" rx="14.0" ry="18.0" fill="#a89058" transform="rotate(20 742 335)" opacity="0.6"/>
<ellipse cx="724.0" cy="400.0" rx="8.0" ry="50.0" fill="#d8b888" transform="rotate(12 724 400)" opacity="0.6"/>
</g></g>
<g clip-path="url(#euc)">
<rect x="600" y="140" width="160" height="230" fill="#fff" filter="url(#ltex)" opacity="0.6"/>
<rect x="600" y="140" width="160" height="230" fill="#fff" filter="url(#dtex)" opacity="0.6"/>
<g filter="url(#b2)">
<ellipse cx="706.0" cy="338.0" rx="9.0" ry="16.0" fill="#a08a54" opacity="0.8"/>
<ellipse cx="720.0" cy="280.0" rx="14.0" ry="20.0" fill="#5a6a30" transform="rotate(30 720 280)" opacity="0.7"/>
<ellipse cx="650.0" cy="190.0" rx="5.0" ry="26.0" fill="#2e4a22" transform="rotate(-38 650 190)" opacity="0.6"/>
</g></g>
<g clip-path="url(#sac)"><g filter="url(#b2)">
<ellipse cx="440.0" cy="562.0" rx="40.0" ry="4.0" fill="#46582a" transform="rotate(20 440 562)" opacity="0.5"/>
<ellipse cx="540.0" cy="588.0" rx="30.0" ry="3.0" fill="#8a7a3c" opacity="0.8"/>
</g></g>
<g filter="url(#b1)">
<path d="M392.0 231.0 C393.8 227.5 397.0 226.0 400.0 224.0 C403.0 222.0 406.2 220.7 410.0 219.0 C413.8 217.3 419.2 213.7 423.0 214.0 C426.8 214.3 431.7 217.3 433.0 221.0 C434.3 224.7 431.5 232.2 431.0 236.0 C430.5 239.8 430.8 241.5 430.0 244.0 C429.2 246.5 426.5 247.8 426.0 251.0 C425.5 254.2 427.8 259.5 427.0 263.0 C426.2 266.5 423.8 269.5 421.0 272.0 C418.2 274.5 412.5 274.7 410.0 278.0 C407.5 281.3 407.5 290.2 406.0 292.0 C404.5 293.8 401.7 291.3 401.0 289.0 C400.3 286.7 402.2 281.3 402.0 278.0 C401.8 274.7 401.3 272.2 400.0 269.0 C398.7 265.8 395.8 263.0 394.0 259.0 C392.2 255.0 389.3 249.7 389.0 245.0 C388.7 240.3 390.2 234.5 392.0 231.0Z" fill="#1b467c" />
<path d="M353.0 303.0 C353.7 301.8 355.8 300.5 358.0 300.0 C360.2 299.5 363.7 299.3 366.0 300.0 C368.3 300.7 370.3 302.3 372.0 304.0 C373.7 305.7 375.3 308.0 376.0 310.0 C376.7 312.0 377.0 315.2 376.0 316.0 C375.0 316.8 371.8 315.8 370.0 315.0 C368.2 314.2 366.8 312.0 365.0 311.0 C363.2 310.0 360.8 309.7 359.0 309.0 C357.2 308.3 355.0 308.0 354.0 307.0 C353.0 306.0 352.3 304.2 353.0 303.0Z" fill="#08100c" />
<path d="M351.0 343.0 C350.2 341.2 350.3 336.8 351.0 334.0 C351.7 331.2 353.5 328.3 355.0 326.0 C356.5 323.7 358.3 321.2 360.0 320.0 C361.7 318.8 363.8 318.3 365.0 319.0 C366.2 319.7 367.3 321.8 367.0 324.0 C366.7 326.2 364.3 329.3 363.0 332.0 C361.7 334.7 360.2 337.8 359.0 340.0 C357.8 342.2 357.3 344.5 356.0 345.0 C354.7 345.5 351.8 344.8 351.0 343.0Z" fill="#08100c" />
<path d="M367.0 320.0 C368.0 318.7 370.8 317.3 373.0 318.0 C375.2 318.7 378.0 321.7 380.0 324.0 C382.0 326.3 384.2 329.3 385.0 332.0 C385.8 334.7 385.7 338.0 385.0 340.0 C384.3 342.0 382.3 344.3 381.0 344.0 C379.7 343.7 378.0 339.8 377.0 338.0 C376.0 336.2 375.7 332.7 375.0 333.0 C374.3 333.3 374.0 338.8 373.0 340.0 C372.0 341.2 369.5 341.5 369.0 340.0 C368.5 338.5 370.3 333.3 370.0 331.0 C369.7 328.7 367.5 327.8 367.0 326.0 C366.5 324.2 366.0 321.3 367.0 320.0Z" fill="#08100c" />
<path d="M366.0 352.0 C366.8 350.5 370.2 348.2 373.0 347.0 C375.8 345.8 379.3 345.7 383.0 345.0 C386.7 344.3 392.7 342.5 395.0 343.0 C397.3 343.5 398.3 346.5 397.0 348.0 C395.7 349.5 390.5 350.8 387.0 352.0 C383.5 353.2 379.2 354.3 376.0 355.0 C372.8 355.7 369.7 356.5 368.0 356.0 C366.3 355.5 365.2 353.5 366.0 352.0Z" fill="#08100c" />
<path d="M396.0 339.0 C395.8 337.8 399.5 335.8 402.0 335.0 C404.5 334.2 409.3 333.3 411.0 334.0 C412.7 334.7 413.3 337.7 412.0 339.0 C410.7 340.3 405.7 342.0 403.0 342.0 C400.3 342.0 396.2 340.2 396.0 339.0Z" fill="#08100c" />
<path d="M486.0 297.0 L489.0 296.0 L495.0 304.0 L493.0 316.0 L490.0 317.0 L490.0 306.0Z" fill="#1b467c" />
<path d="M430.0 327.0 L440.0 321.0 L449.0 316.0 L450.0 318.0 L441.0 324.0 L431.0 329.0Z" fill="#28568c" opacity="0.9"/>
<path d="M452.0 241.0 L456.0 246.0 L459.0 258.0 L463.0 252.0 L466.0 247.0 L460.0 240.0Z" fill="#1a4480" />
<path d="M668.0 193.0 L672.0 200.0 L677.0 210.0 L682.0 222.0 L680.0 223.0 L674.0 213.0 L669.0 203.0 L665.0 195.0Z" fill="#244e98" opacity="0.9"/>
<path d="M676.0 228.0 L682.0 226.0 L686.0 234.0 L684.0 238.0 L679.0 234.0Z" fill="#1a4480" opacity="0.9"/>
</g>
<g filter="url(#rough2)">
<path d="M493.0 170.0 C493.7 168.8 496.7 166.9 499.0 165.0 C501.3 163.1 503.5 159.8 507.0 158.5 C510.5 157.2 514.7 157.5 520.0 157.0 C525.3 156.5 534.2 155.3 539.0 155.5 C543.8 155.7 546.5 157.1 549.0 158.0 C551.5 158.9 552.5 159.3 554.0 161.0 C555.5 162.7 557.0 165.5 558.0 168.0 C559.0 170.5 559.5 173.5 560.0 176.0 C560.5 178.5 560.0 181.0 561.0 183.0 C562.0 185.0 564.5 186.7 566.0 188.0 C567.5 189.3 568.5 189.7 570.0 191.0 C571.5 192.3 574.7 193.8 575.0 196.0 C575.3 198.2 573.7 202.0 572.0 204.0 C570.3 206.0 567.3 206.7 565.0 208.0 C562.7 209.3 560.2 209.8 558.0 212.0 C555.8 214.2 553.5 218.5 552.0 221.0 C550.5 223.5 549.8 225.0 549.0 227.0 C548.2 229.0 547.7 230.7 547.0 233.0 C546.3 235.3 545.5 238.5 545.0 241.0 C544.5 243.5 544.5 245.7 544.0 248.0 C543.5 250.3 543.2 254.2 542.0 255.0 C540.8 255.8 538.5 253.8 537.0 253.0 C535.5 252.2 534.7 251.2 533.0 250.0 C531.3 248.8 528.7 247.5 527.0 246.0 C525.3 244.5 524.2 243.2 523.0 241.0 C521.8 238.8 520.7 235.5 520.0 233.0 C519.3 230.5 519.2 228.5 519.0 226.0 C518.8 223.5 519.2 220.7 519.0 218.0 C518.8 215.3 518.7 212.5 518.0 210.0 C517.3 207.5 515.8 205.3 515.0 203.0 C514.2 200.7 513.8 198.5 513.0 196.0 C512.2 193.5 510.8 190.5 510.0 188.0 C509.2 185.5 509.2 182.7 508.0 181.0 C506.8 179.3 504.5 179.0 503.0 178.0 C501.5 177.0 500.3 176.0 499.0 175.0 C497.7 174.0 496.0 172.8 495.0 172.0 C494.0 171.2 492.3 171.2 493.0 170.0Z" fill="#fbfbfb" />
<path d="M572.0 152.0 C571.8 150.7 574.3 149.5 576.0 149.0 C577.7 148.5 580.2 148.3 582.0 149.0 C583.8 149.7 586.7 151.7 587.0 153.0 C587.3 154.3 585.7 156.3 584.0 157.0 C582.3 157.7 579.0 157.8 577.0 157.0 C575.0 156.2 572.2 153.3 572.0 152.0Z" fill="#f0f0f0" />
<ellipse cx="606.0" cy="219.0" rx="4.0" ry="2.5" fill="#ffffff" transform="rotate(10 606 219)" />
</g>
<g filter="url(#b1)"><path d="M515.0 203.0 L518.0 210.0 L519.0 218.0 L519.0 226.0 L520.0 233.0 L523.0 241.0 L527.0 246.0 L533.0 250.0 L534.0 247.0 L528.0 242.0 L524.0 234.0 L523.0 226.0 L522.0 216.0 L520.0 208.0 L517.0 202.0Z" fill="#6a6a44" opacity="0.8"/><path d="M558.0 212.0 L565.0 208.0 L572.0 204.0 L574.0 200.0 L567.0 203.0 L560.0 207.0Z" fill="#6a6a44" opacity="0.7"/></g>
</g>
<circle cx="520.0" cy="360.0" r="232.0" fill="url(#atm)"/>
</g>
</svg></div>
  <div id="status" class="abs"><div class="t">可见性: 4736.554 千米</div></div>
    <div class="tab" style="top:118px;height:52px"><div class="v" style="top:28px">目录</div></div>
  <div class="tab" style="top:172px;height:53px"><div class="v" style="top:30px">搜索</div></div>
  <svg width="854" height="629" viewBox="0 0 854 629" style="position:absolute;left:0;top:0;pointer-events:none">
<defs>
<radialGradient id="gl" cx="0.38" cy="0.32" r="0.75"><stop offset="0" stop-color="#9fd0ff"/><stop offset="0.45" stop-color="#2f74d0"/><stop offset="1" stop-color="#0b2f78"/></radialGradient>
<linearGradient id="ovf" x1="0" y1="0" x2="0" y2="1"><stop offset="0" stop-color="#f0f0f0"/><stop offset="1" stop-color="#b9b9b9"/></linearGradient>
<linearGradient id="fold" x1="0" y1="0" x2="0" y2="1"><stop offset="0" stop-color="#f6e48a"/><stop offset="1" stop-color="#d9b33a"/></linearGradient>
<radialGradient id="inf" cx="0.4" cy="0.3" r="0.8"><stop offset="0" stop-color="#5aa0f0"/><stop offset="0.6" stop-color="#1858c0"/><stop offset="1" stop-color="#0a3488"/></radialGradient>
</defs>
<ellipse cx="16.5" cy="24.8" rx="4.2" ry="1.4" fill="#8a6a2a"/>
<path d="M10.5 13 a7.2 7.2 0 0 0 11 9" fill="none" stroke="#c89a30" stroke-width="1.8"/>
<circle cx="17.5" cy="16" r="5.6" fill="url(#gl)" stroke="#16366e" stroke-width="0.6"/>
<path d="M16.94 11.52 L20.30 12.92 L20.86 16.00 L18.90 19.08 L16.38 18.52 L16.94 16.00 L14.70 14.60 L14.98 12.64Z" fill="#4fa030" opacity="0.95" stroke="#4fa030" stroke-width="0.84" stroke-linejoin="round"/>
<rect x="730" y="17" width="10" height="1" fill="#222"/>
<rect x="776.5" y="12.5" width="10" height="10" fill="none" stroke="#222" stroke-width="1"/>
<path d="M823 12.5 l10 10 M833 12.5 l-10 10" stroke="#222" stroke-width="1.1" fill="none"/>
<rect x="6" y="40" width="2" height="2" fill="#c6c6c6"/>
<rect x="6" y="44" width="2" height="2" fill="#c6c6c6"/>
<rect x="6" y="48" width="2" height="2" fill="#c6c6c6"/>
<rect x="6" y="52" width="2" height="2" fill="#c6c6c6"/>
<rect x="6" y="56" width="2" height="2" fill="#c6c6c6"/>
<rect x="392" y="51" width="15" height="6" fill="#dfe7f2" stroke="#8d9db8" stroke-width="0.8"/>
<rect x="412" y="42" width="11" height="17" fill="url(#ovf)"/>
<rect x="414.0" y="48" width="7" height="1.6" fill="#000"/>
<path d="M414.0 51 h7 l-3.5 4z" fill="#000"/>
<path d="M431 54 v-7 q0 -3 3.5 -3 q3.5 0 3.5 3 v7" fill="none" stroke="#9ab8dc" stroke-width="2"/>
<rect x="8" y="67" width="2" height="2" fill="#c6c6c6"/>
<rect x="8" y="71" width="2" height="2" fill="#c6c6c6"/>
<rect x="8" y="75" width="2" height="2" fill="#c6c6c6"/>
<rect x="8" y="79" width="2" height="2" fill="#c6c6c6"/>
<rect x="8" y="83" width="2" height="2" fill="#c6c6c6"/>
<path d="M17.5 67.5 h8 l4 4 v10 h-12z" fill="#fff" stroke="#7a7a7a" stroke-width="1"/><path d="M25.5 67.5 v4 h4" fill="none" stroke="#7a7a7a" stroke-width="1"/>
<path d="M38 81 v-10 h5 l1.5 1.5 h6.5 v8.5z" fill="#e2bd48" stroke="#8a6a14" stroke-width="0.9"/><path d="M38 81 l3 -6 h13 l-3 6z" fill="url(#fold)" stroke="#8a6a14" stroke-width="0.9"/><path d="M46 70 q3 -3.5 6 -1.5 v-2 l3 3.2 -3 2.8 v-2 q-3 -1.5 -6 -0.5z" fill="#2a62c8"/>
<rect x="61.5" y="67.5" width="13" height="14" fill="#c8a838" stroke="#5a4a10" stroke-width="1"/><rect x="64" y="68" width="8" height="5" fill="#f4f0e0"/><rect x="64.5" y="76" width="7" height="5.5" fill="#3a3a3a"/><rect x="68.5" y="77" width="2" height="3.5" fill="#e8e8e8"/>
<rect x="85" y="67" width="10" height="6" fill="#fff" stroke="#555" stroke-width="0.9"/><rect x="82.5" y="72.5" width="16" height="7" rx="1.5" fill="#d8c070" stroke="#4a4a4a" stroke-width="1"/><rect x="85.5" y="77" width="10" height="4.5" fill="#fff" stroke="#555" stroke-width="0.9"/><rect x="87" y="79" width="6" height="1" fill="#3a7ad0"/>
<rect x="104.5" y="66" width="1" height="19" fill="#c4c4c4"/>
<path d="M116 67 l6 10 M123 67 l-6 10" stroke="#bdbdbd" stroke-width="1.4" fill="none"/><circle cx="115.5" cy="79" r="2.3" fill="none" stroke="#bdbdbd" stroke-width="1.3"/><circle cx="123.5" cy="79" r="2.3" fill="none" stroke="#bdbdbd" stroke-width="1.3"/>
<path d="M135.500 71.500 h6 l3 3 v8 h-9z M140.500 67.500 h6 l3 3 v8 h-4" fill="#f2f2f2" stroke="#bdbdbd" stroke-width="1"/><path d="M137.500 76 h5 M137.500 78 h5 M137.500 80 h5" stroke="#bdbdbd" stroke-width="0.8"/>
<rect x="157.500" y="68.500" width="10" height="12" fill="#d8d8d8" stroke="#bdbdbd" stroke-width="1"/><rect x="160" y="67" width="5" height="3" fill="#bdbdbd"/><path d="M162.500 73.500 h6 l3 3 v6 h-9z" fill="#f6f6f6" stroke="#bdbdbd" stroke-width="1"/><path d="M164.500 78 h5 M164.500 80 h5" stroke="#bdbdbd" stroke-width="0.8"/>
<path d="M182.500 70 l8.500 9 M191 70 l-8.500 9" stroke="#a8a8a8" stroke-width="2.2" fill="none"/>
<rect x="200" y="66" width="1" height="19" fill="#c4c4c4"/>
<path d="M212 72.500 q5 -3 8 0 q3 3.500 -1 7" fill="none" stroke="#bdbdbd" stroke-width="2"/><path d="M209 69 l1 6.500 5.500 -2.500z" fill="#bdbdbd"/>
<path d="M242 72.500 q-5 -3 -8 0 q-3 3.500 1 7" fill="none" stroke="#bdbdbd" stroke-width="2"/><path d="M245 69 l-1 6.500 -5.500 -2.500z" fill="#bdbdbd"/>
<rect x="252" y="66" width="1" height="19" fill="#c4c4c4"/>
<path d="M263 71 q5 -3 7 1 q2 4 -2 7" fill="none" stroke="#c0c0c0" stroke-width="1.8"/><path d="M258 75 l7 -5 v4 l3 6 h-4z" fill="#e8c860" stroke="#a08020" stroke-width="0.6"/><circle cx="264.500" cy="70" r="1.600" fill="#111"/>
<path d="M298 72.500 q-5 -3 -8 0 q-3 3.500 1 7" fill="none" stroke="#c4c4c4" stroke-width="2"/><path d="M301 69 l-1 6.500 -5.500 -2.500z" fill="#c4c4c4"/>
<path d="M310 70 h3 l2.500 10 h-8z" fill="#4a4a40"/><rect x="310.500" y="74" width="2.500" height="3" fill="#d8c060"/><path d="M306 81 h5" stroke="#d06040" stroke-width="0.8"/>
<path d="M333 73.500 q-4 -2.500 -7 0 q-1.500 2 -1 5" fill="none" stroke="#c8c8c8" stroke-width="2"/><path d="M335.500 71 l-1 5.500 -4.500 -2z" fill="#c8c8c8"/><rect x="323.500" y="75" width="1.600" height="3" fill="#4a90e0"/>
<path d="M351 67.500 l6 -0.800" stroke="#c06a60" stroke-width="1"/>
<path d="M404 65.500 h13 v3 M407 68 v11 M410.500 68 v11 M404 65.500 v3" fill="none" stroke="#bdbdbd" stroke-width="1.4"/><path d="M403 83 l6 -3" stroke="#d04a40" stroke-width="0.9"/>
<path d="M419.500 72 v7.500 h14 v-12 h-6" fill="none" stroke="#7f86a8" stroke-width="1.3"/><path d="M427 67.500 h6.500 v3" fill="none" stroke="#3a60c0" stroke-width="1.3"/>
<rect x="440" y="66" width="1" height="19" fill="#c4c4c4"/>
<path d="M451 71 h4 v8 h-4 M455 75 h4" fill="none" stroke="#5a8ac0" stroke-width="1"/><rect x="446.500" y="67.500" width="5" height="5" fill="#58a8f0" stroke="#1c5aa8" stroke-width="0.9"/><rect x="446.500" y="77.500" width="5" height="5" fill="#58a8f0" stroke="#1c5aa8" stroke-width="0.9"/><rect x="453.500" y="73" width="4" height="4" fill="#e8d850" stroke="#8a8010" stroke-width="0.8"/><rect x="459" y="72.500" width="4.500" height="4.500" fill="#70c040" stroke="#2a7010" stroke-width="0.8"/>
<rect x="467.5" y="65" width="11" height="22" fill="url(#ovf)"/>
<rect x="469.5" y="76" width="7" height="1.6" fill="#000"/>
<path d="M469.5 79 h7 l-3.5 4z" fill="#000"/>
<rect x="486" y="67" width="2" height="2" fill="#c6c6c6"/>
<rect x="486" y="71" width="2" height="2" fill="#c6c6c6"/>
<rect x="486" y="75" width="2" height="2" fill="#c6c6c6"/>
<rect x="486" y="79" width="2" height="2" fill="#c6c6c6"/>
<rect x="486" y="83" width="2" height="2" fill="#c6c6c6"/>
<rect x="490.500" y="65.500" width="181.500" height="18" fill="#fff" stroke="#8c8c8c" stroke-width="1"/><rect x="491" y="66" width="180.500" height="1" fill="#6a6a6a" opacity="0.6"/>
<rect x="655" y="67" width="16" height="15.500" fill="#ececec" stroke="#a0a0a0" stroke-width="1"/><path d="M659.500 72.500 h8 l-4 4.500z" fill="#000"/>
<path d="M493 76 l7 -6 h7 v6 l-7 6z" fill="#e8c468" stroke="#a07a1c" stroke-width="0.8"/>
<circle cx="503.5" cy="72.5" r="4.6" fill="url(#gl)" stroke="#16366e" stroke-width="0.6"/>
<path d="M503.04 68.82 L505.80 69.97 L506.26 72.50 L504.65 75.03 L502.58 74.57 L503.04 72.50 L501.20 71.35 L501.43 69.74Z" fill="#4fa030" opacity="0.95" stroke="#4fa030" stroke-width="0.69" stroke-linejoin="round"/>
<circle cx="685.500" cy="75" r="6.500" fill="#dcdcdc" stroke="#bcbcbc" stroke-width="0.8"/><path d="M685.500 68.500 a6.500 6.500 0 0 1 0 13z" fill="#a8a8a8"/>
<path d="M708.500 67 l1.800 3 3.200 -1.300 -0.400 3.400 3.300 1 -2.500 2.300 2 2.800 -3.400 0.400 -0.200 3.400 -3 -1.700 -2.200 2.700 -1.500 -3.100 -3.400 0.800 0.800 -3.300 -3.100 -1.500 2.700 -2.100 -1.700 -3 3.400 -0.200 0.300 -3.400 2.900 1.800z" fill="#c6c6c6"/>
<rect x="723.500" y="67.500" width="11" height="10" fill="#e4ecf8" stroke="#3a5aa8" stroke-width="1"/><path d="M725 76 l4 -6 l3 3 l2 -2 v5z" fill="#4a9a3a"/><path d="M728 78 l5 -5 h6 v4 l-5 5z" fill="#ecc860" stroke="#a8821c" stroke-width="0.7"/>
<path d="M753 67 l8 11 -6 4 -9 -4z" fill="#8cc050" stroke="#4a7a20" stroke-width="0.7"/><path d="M753 67 l2 15 -9 -4z" fill="#b8dc78"/><path d="M746 78 l9 4 6 -4 -1 2 -5 3.500 -8 -3.500z" fill="#e0c050"/>
<rect x="767" y="66" width="1" height="19" fill="#c4c4c4"/>
<path d="M776 74 l6 -5 8 6 -6 6z" fill="#d8d8d8" stroke="#c0c0c0" stroke-width="0.8"/><path d="M776 74 l8 7 v-3 l-6 -5z" fill="#c4c4c4"/>
<path d="M805 67 l8 11 -6 4 -9 -4z" fill="#cfcfcf"/><path d="M805 67 l2 15 -9 -4z" fill="#e2e2e2"/>
<rect x="840.5" y="66" width="10" height="21.5" fill="url(#ovf)"/>
<rect x="842.0" y="76.5" width="7" height="1.6" fill="#000"/>
<path d="M842.0 79.5 h7 l-3.5 4z" fill="#000"/>
<path d="M842.5 69 l2 1.5 l-2 1.5z M846.5 69 l2 1.5 l-2 1.5z" fill="#000"/>
<rect x="8" y="93" width="2" height="2" fill="#c6c6c6"/>
<rect x="8" y="97" width="2" height="2" fill="#c6c6c6"/>
<rect x="8" y="101" width="2" height="2" fill="#c6c6c6"/>
<rect x="8" y="105" width="2" height="2" fill="#c6c6c6"/>
<rect x="8" y="109" width="2" height="2" fill="#c6c6c6"/>
<rect x="11.500" y="90.500" width="22" height="22" fill="#d6e8fb" stroke="#3c8ad8" stroke-width="1"/>
<circle cx="22.5" cy="101.5" r="4.2" fill="url(#gl)" stroke="#16366e" stroke-width="0.6"/>
<path d="M22.08 98.14 L24.60 99.19 L25.02 101.50 L23.55 103.81 L21.66 103.39 L22.08 101.50 L20.40 100.45 L20.61 98.98Z" fill="#4fa030" opacity="0.95" stroke="#4fa030" stroke-width="0.63" stroke-linejoin="round"/>
<path d="M22.500 93 l3 3.500 h-6z M22.500 110 l3 -3.500 h-6z M14 101.500 l3.500 -3 v6z M31 101.500 l-3.500 -3 v6z" fill="#111"/>
<path d="M41.500 103 q-2.500 -3 -3 -4 q1 -1.500 3 0.500 l0.800 1 v-6 q1.200 -1.500 2.200 0 v-1.500 q1.300 -1.500 2.400 0 v1 q1.300 -1.300 2.400 0.200 v1.300 q1.200 -1 2.200 0.500 v7 q0 5 -3 7 h-5 q-2.500 -2 -4 -7z" fill="#fff" stroke="#444" stroke-width="0.9"/><path d="M44.500 95 v5 M47 94.500 v5.500 M49.500 95.500 v4.500" stroke="#444" stroke-width="0.8"/>
<path d="M59.500 102.500 q4 -3 7 -0.500 l1 -1.200 l1 1.200 q3 -2.500 7 0.500 q-4 -1 -6.500 1 l-1.500 1.500 l-1.500 -1.500 q-2.500 -2 -6.500 -1z" fill="#222"/>
<circle cx="90" cy="103" r="4.500" fill="none" stroke="#bcbcbc" stroke-width="1.200"/><circle cx="90" cy="103" r="1.600" fill="#c8c8c8"/><path d="M90 94 v5 M83.500 106 h13" stroke="#bcbcbc" stroke-width="1.100"/>
<circle cx="113.5" cy="101.5" r="7.5" fill="url(#gl)" stroke="#16366e" stroke-width="0.6"/>
<path d="M112.75 95.50 L117.25 97.38 L118.00 101.50 L115.38 105.62 L112.00 104.88 L112.75 101.50 L109.75 99.62 L110.12 97.00Z" fill="#4fa030" opacity="0.95" stroke="#4fa030" stroke-width="1.12" stroke-linejoin="round"/>
<rect x="126" y="92" width="1" height="19" fill="#c4c4c4"/>
<rect x="130.500" y="90.500" width="22" height="22" fill="#d6e8fb" stroke="#3c8ad8" stroke-width="1"/>
<circle cx="137" cy="96.5" r="3.8" fill="url(#gl)" stroke="#16366e" stroke-width="0.6"/>
<path d="M136.62 93.46 L138.90 94.41 L139.28 96.50 L137.95 98.59 L136.24 98.21 L136.62 96.50 L135.10 95.55 L135.29 94.22Z" fill="#4fa030" opacity="0.95" stroke="#4fa030" stroke-width="0.57" stroke-linejoin="round"/>
<path d="M134 109 l15 -15" stroke="#222" stroke-width="1.500"/><path d="M141.500 104.500 l4 -2.500 5 2 v3.500 l-4 2.500 -5 -2z" fill="#6aa83a" stroke="#2a5a90" stroke-width="0.900"/>
<rect x="155.5" y="92" width="1" height="19" fill="#c4c4c4"/>
<rect x="165.500" y="94.500" width="12" height="9" fill="#dadada" stroke="#bdbdbd" stroke-width="1"/><path d="M165.500 94.500 l6 5 6 -5" fill="none" stroke="#bdbdbd" stroke-width="1"/><path d="M165 99 l6 8 1 -3.500 3.500 -0.500z" fill="#c2c2c2"/>
<path d="M184.500 100.500 h5 l-2.500 3z" fill="#9a9a9a"/>
<rect x="199.500" y="95.500" width="11" height="11" fill="#ededed" stroke="#bdbdbd" stroke-width="1.200"/><path d="M202 98 l3 3.500 l3 -3.500 M205 101.500 v3.500" fill="none" stroke="#c6c6c6" stroke-width="1.200"/>
<rect x="218" y="92" width="1" height="19" fill="#c4c4c4"/>
<path d="M229.500 94 v13 l3.200 -3 2.300 5 2 -1 -2.300 -4.800 4.300 -0.400z" fill="#9c9c9c"/>
<rect x="246" y="92" width="1" height="19" fill="#c4c4c4"/>
<circle cx="261" cy="101.500" r="8" fill="url(#inf)" stroke="#0a2e78" stroke-width="0.700"/><circle cx="261" cy="96.800" r="1.500" fill="#fff"/><path d="M259 99.500 h3.200 v6 h1.300 v1.300 h-5 v-1.300 h1.500 v-4.700 h-1z" fill="#fff"/>
<path d="M286 94 v13 l3.200 -3 2.300 5 2 -1 -2.300 -4.800 4.300 -0.400z" fill="#b0b0b0"/>
<path d="M311 104 q-4 -3 -8 0 q-1 1.500 -1 3" fill="none" stroke="#c4c4c4" stroke-width="2"/><path d="M313.500 101.500 l-1 5.500 -4.500 -2z" fill="#c4c4c4"/>
<rect x="321.5" y="92" width="1" height="19" fill="#c4c4c4"/>
<path d="M328 96.500 l3.500 -3 v2 h2.500 v2 h-2.500 v2z M343 96.500 l-3.500 -3 v2 h-2.500 v2 h2.500 v2z" fill="#2a62d0"/><rect x="328" y="103" width="6" height="5.500" fill="#333"/><rect x="337" y="103" width="6" height="5.500" fill="#333"/><rect x="329.500" y="104" width="3" height="1.500" fill="#c8b060"/><rect x="338.500" y="101.500" width="3" height="2.500" fill="#777"/>
<path d="M355 95.500 q2 3.500 6 1 q1.500 -1.500 0.500 -3" fill="none" stroke="#2a5ab8" stroke-width="1.500"/><circle cx="358.500" cy="95" r="1.200" fill="#2a5ab8"/>
<rect x="373" y="92" width="1" height="19" fill="#c4c4c4"/>
<path d="M379 96.500 l3.500 -3 v2 h2.500 v2 h-2.500 v2z M394.500 96.500 l-3.500 -3 v2 h-2.500 v2 h2.500 v2z" fill="#2a62d0"/><rect x="378.500" y="102.500" width="16.500" height="6" fill="#e0b860" stroke="#8a6a20" stroke-width="0.800"/><path d="M381.500 105 v3.500 M384.500 105 v3.500 M387.500 105 v3.500 M390.500 105 v3.500" stroke="#5a4210" stroke-width="0.900"/>
<rect x="401" y="92" width="1" height="19" fill="#c4c4c4"/>
<circle cx="412.5" cy="97.5" r="3.6" fill="url(#gl)" stroke="#16366e" stroke-width="0.6"/>
<path d="M412.14 94.62 L414.30 95.52 L414.66 97.50 L413.40 99.48 L411.78 99.12 L412.14 97.50 L410.70 96.60 L410.88 95.34Z" fill="#4fa030" opacity="0.95" stroke="#4fa030" stroke-width="0.54" stroke-linejoin="round"/>
<rect x="413.500" y="99.500" width="3.500" height="9.500" fill="#1a1a1a"/><rect x="418.500" y="99.500" width="3.500" height="9.500" fill="#1a1a1a"/><path d="M409.500 100 l-1 2" stroke="#222" stroke-width="1"/>
<circle cx="436" cy="97.5" r="3.8" fill="url(#gl)" stroke="#16366e" stroke-width="0.6"/>
<path d="M435.62 94.46 L437.90 95.41 L438.28 97.50 L436.95 99.59 L435.24 99.21 L435.62 97.50 L434.10 96.55 L434.29 95.22Z" fill="#4fa030" opacity="0.95" stroke="#4fa030" stroke-width="0.57" stroke-linejoin="round"/>
<rect x="435.500" y="98.500" width="11" height="10" fill="#e4eefa" stroke="#3a6090" stroke-width="1.100"/><rect x="438" y="102" width="6" height="3.500" fill="#7aa8d8" stroke="#2a5090" stroke-width="0.700"/>
<rect x="452.5" y="92" width="1" height="19" fill="#c4c4c4"/>
<rect x="459.500" y="94.500" width="15" height="13" rx="1" fill="#e6e6e6" stroke="#c2c2c2" stroke-width="1.200"/><circle cx="467" cy="102" r="4" fill="#f2f2f2" stroke="#c2c2c2" stroke-width="1"/><path d="M467 99.500 v2.500 h2" fill="none" stroke="#bdbdbd" stroke-width="1"/>
<rect x="480.5" y="93" width="10.5" height="21" fill="url(#ovf)"/>
<rect x="482.25" y="103" width="7" height="1.6" fill="#000"/>
<path d="M482.25 106 h7 l-3.5 4z" fill="#000"/>
<path d="M177.500 123 h5 M178.500 123 v5 M181.500 122.500 v5.500 M176 128 h7.500 M180 128 v4" fill="none" stroke="#111" stroke-width="1.200"/>
<path d="M193 122.500 l8 8 M201 122.500 l-8 8" stroke="#111" stroke-width="1.800"/>
<rect x="5.500" y="139.500" width="21" height="22" fill="#d6e8fb" stroke="#3c8ad8" stroke-width="1"/>
<path d="M13 144 v13 M13 146 h3 M13 151 h3 M13 156 h3" stroke="#666" stroke-width="1" fill="none"/><path d="M15 144 l4 2 -4 2z" fill="#e8c040" stroke="#8a6a10" stroke-width="0.500"/><path d="M15 149 l4 2 -4 2z" fill="#60b040" stroke="#2a6a10" stroke-width="0.500"/><path d="M15 154 l4 2 -4 2z" fill="#e07030" stroke="#8a3a10" stroke-width="0.500"/>
<path d="M34 145 v12 M34 151 h3 M34 157 h3" stroke="#555" stroke-width="1" fill="none"/><circle cx="35" cy="144.500" r="2.500" fill="#e8c040" stroke="#8a6a10" stroke-width="0.600"/><path d="M38 148.500 l4 2.500 -4 2.500z" fill="#e8c040" stroke="#8a6a10" stroke-width="0.500"/><path d="M38 154.500 l4 2.500 -4 2.500z" fill="#60b040" stroke="#2a6a10" stroke-width="0.500"/><rect x="44" y="150" width="2" height="2" fill="#222"/><rect x="44" y="156" width="2" height="2" fill="#222"/>
<path d="M56 147 v7 q5 3 10 0 v-7z" fill="#9aa6c8" stroke="#4a5688" stroke-width="0.800"/><ellipse cx="61" cy="147" rx="5" ry="2" fill="#d0d8f0" stroke="#4a5688" stroke-width="0.800"/><path d="M54 153 h14 l-7 7z" fill="#f0c850" stroke="#a07a10" stroke-width="0.800"/>
<rect x="78.500" y="142.500" width="10" height="10" fill="#58b8e8" stroke="#1a4a80" stroke-width="1"/><path d="M80 144 h4 l3 4 v3 h-7z" fill="#f4f4f4" opacity="0.800"/><path d="M76 153 h15 l-7.500 7z" fill="#f0c850" stroke="#a07a10" stroke-width="0.800"/><path d="M79 152 l4 -3 3 3z" fill="#e05030"/>
<rect x="10.5" y="172.5" width="8" height="8" fill="#fff" stroke="#8a8a8a" stroke-width="1"/><path d="M12.5 176.5 h4" stroke="#333" stroke-width="1"/>
<circle cx="33.5" cy="176" r="6" fill="url(#gl)" stroke="#16366e" stroke-width="0.6"/>
<path d="M32.90 171.20 L36.50 172.70 L37.10 176.00 L35.00 179.30 L32.30 178.70 L32.90 176.00 L30.50 174.50 L30.80 172.40Z" fill="#4fa030" opacity="0.95" stroke="#4fa030" stroke-width="0.90" stroke-linejoin="round"/>
<rect x="29.5" y="213.5" width="8" height="8" fill="#fff" stroke="#8a8a8a" stroke-width="1"/><path d="M31.5 217.5 h4" stroke="#333" stroke-width="1"/>
<rect x="29.5" y="255.5" width="8" height="8" fill="#fff" stroke="#8a8a8a" stroke-width="1"/><path d="M31.5 259.5 h4" stroke="#333" stroke-width="1"/>
<path d="M46 196.5 l8 -3 8 3 -8 3.500z" fill="#e8d088" stroke="#7a6a30" stroke-width="0.600"/>
<path d="M46 193 l8 -3 8 3 -8 3.500z" fill="#a8c4e8" stroke="#7a6a30" stroke-width="0.600"/>
<path d="M46 217.5 l8 -3 8 3 -8 3.500z" fill="#88b848" stroke="#7a6a30" stroke-width="0.600"/>
<path d="M46 214 l8 -3 8 3 -8 3.500z" fill="#e8d070" stroke="#7a6a30" stroke-width="0.600"/>
<path d="M46 259.5 l8 -3 8 3 -8 3.500z" fill="#e8c060" stroke="#7a6a30" stroke-width="0.600"/>
<path d="M46 256 l8 -3 8 3 -8 3.500z" fill="#e8d8a0" stroke="#7a6a30" stroke-width="0.600"/>
<path d="M50 255 l4 -5 4 5z" fill="#6a8ad0" stroke="#2a4a90" stroke-width="0.600"/>
<rect x="67.5" y="233.5" width="10" height="10" fill="#fff" stroke="#222" stroke-width="1.200"/><path d="M69.3 238.2 l2.200 2.400 l3.800 -5" fill="none" stroke="#111" stroke-width="1.600"/>
<rect x="67.5" y="274.5" width="10" height="10" fill="#fff" stroke="#222" stroke-width="1.200"/><path d="M69.3 279.2 l2.200 2.400 l3.800 -5" fill="none" stroke="#111" stroke-width="1.600"/>
<rect x="67.5" y="294.5" width="10" height="10" fill="#fff" stroke="#222" stroke-width="1.200"/><path d="M69.3 299.2 l2.200 2.400 l3.800 -5" fill="none" stroke="#111" stroke-width="1.600"/>
<path d="M13.500 590 l-4 4 4 4" fill="none" stroke="#555" stroke-width="1.800"/><path d="M191 590 l4 4 -4 4" fill="none" stroke="#555" stroke-width="1.800"/>
<rect x="20" y="587" width="160" height="15" fill="#cdcdcd"/>
<rect x="834.500" y="121.500" width="15" height="12" fill="#f4f6fa" stroke="#3a5a98" stroke-width="1"/><rect x="834.500" y="121.500" width="15" height="2.500" fill="#3a6ac0"/><path d="M838 131 l4 -2 v-4 l4 -2 3 1.500 v8 l-6 3 -5 -2z" fill="#d8c830" stroke="#7a7010" stroke-width="0.600"/><path d="M838 131 l5 2 v3.500 l-5 -2z" fill="#8a9a20"/>
<rect x="834.500" y="176.500" width="15" height="12" fill="#f4f6fa" stroke="#3a5a98" stroke-width="1"/><rect x="834.500" y="176.500" width="15" height="2.500" fill="#3a6ac0"/><path d="M836.500 181.500 h11 M836.500 183.500 h11" stroke="#9ab" stroke-width="0.800"/>
<circle cx="844" cy="188.5" r="4.2" fill="url(#gl)" stroke="#16366e" stroke-width="0.6"/>
<path d="M843.58 185.14 L846.10 186.19 L846.52 188.50 L845.05 190.81 L843.16 190.39 L843.58 188.50 L841.90 187.45 L842.11 185.98Z" fill="#4fa030" opacity="0.95" stroke="#4fa030" stroke-width="0.63" stroke-linejoin="round"/>
<rect x="848" y="625" width="2" height="2" fill="#b8b8b8"/>
<rect x="845" y="625" width="2" height="2" fill="#b8b8b8"/>
<rect x="848" y="622" width="2" height="2" fill="#b8b8b8"/>
<rect x="842" y="625" width="2" height="2" fill="#b8b8b8"/>
<rect x="845" y="622" width="2" height="2" fill="#b8b8b8"/>
<rect x="848" y="619" width="2" height="2" fill="#b8b8b8"/>
</svg>
  <div class="abs" style="left:513px;top:67px;font-size:13px;line-height:16px;color:#000">Imagery</div>
  <div class="abs" style="left:351px;top:99px;font-size:9.5px;line-height:11px;font-weight:bold;color:#1c4aa8;letter-spacing:-0.3px">XY</div>
  <div id="bt" class="abs"></div><div id="bl" class="abs"></div><div id="br" class="abs"></div>
</div>
</body>
</html>
